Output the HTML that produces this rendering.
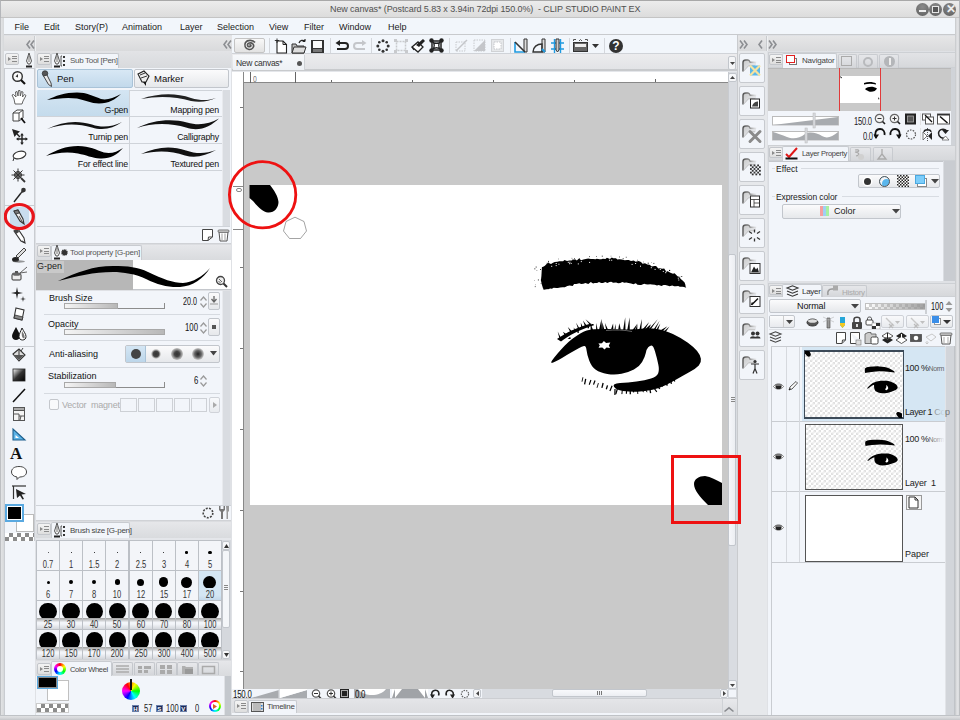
<!DOCTYPE html>
<html><head><meta charset="utf-8">
<style>
*{margin:0;padding:0;box-sizing:border-box}
html,body{width:960px;height:720px;overflow:hidden;background:#e4e6ea;font-family:"Liberation Sans",sans-serif;font-size:9px;color:#222}
.a{position:absolute}
svg{position:absolute;overflow:visible}
.pbg{background:#f2f5fa}
.t{position:absolute;white-space:nowrap;line-height:1}
.hdr{position:absolute;background:linear-gradient(#d2d4d8 0,#d2d4d8 1px,#ececee 2px,#dcdde0 100%)}
.mbtn{position:absolute;width:14px;height:12px;border:1px solid #c4c7cc;border-radius:2px;background:linear-gradient(#f4f4f4,#dedede)}
.mbtn:after{content:"";position:absolute;left:6px;top:2px;width:5px;height:6px;background:repeating-linear-gradient(#8a8a8a 0,#8a8a8a 1px,transparent 1px,transparent 2.5px)}.mbtn:before{content:"";position:absolute;left:2px;top:2.5px;border-left:3px solid #8a8a8a;border-top:2.5px solid transparent;border-bottom:2.5px solid transparent}
.tab{position:absolute;background:#f2f5fa;border:1px solid #c8cbd0;border-bottom:none;border-radius:2px 2px 0 0}
.tabg{position:absolute;background:linear-gradient(#e8e9ec,#d4d6da);border:1px solid #c4c7cc;border-bottom:none;border-radius:2px 2px 0 0}
.sep{position:absolute;height:1px;background:#d6dae0}
.btn{position:absolute;border:1px solid #c2c6cc;border-radius:2px;background:linear-gradient(#fbfbfc,#e6e8eb)}
.cell{position:absolute;border-right:1px solid #cfd3d9;border-bottom:1px solid #cfd3d9;background:#f2f5fa}
</style></head><body>
<svg width="0" height="0" style="position:absolute">
<defs>
<symbol id="stk" viewBox="0 0 100 20" preserveAspectRatio="none"><path d="M0,15 C12,7 25,2 40,3 C55,4 65,13 78,14 C88,14.5 95,9 100,5 C96,11 88,18 76,18.5 C62,19 52,12 40,9 C26,6 12,10 0,15Z"/></symbol>
</defs></svg>
<!-- frame + title + menu -->
<div class="a" style="left:0;top:0;width:960px;height:720px;border:1px solid #b4b6ba;border-top-color:#a8a8a8"></div>
<div class="a" style="left:1px;top:1px;width:958px;height:17px;background:linear-gradient(#ececec,#dcdcdc);border-bottom:1px solid #c4c4c4"></div>
<div class="t" style="left:330px;top:5px;font-size:9px;color:#505050;letter-spacing:-0.1px">New canvas* (Postcard 5.83 x 3.94in 72dpi 150.0%)&nbsp; - CLIP STUDIO PAINT EX</div>
<div class="a" style="left:916px;top:3px;width:13px;height:13px;border-radius:50%;background:radial-gradient(circle at 50% 30%,#8a8a8a,#5e5e5e)"></div>
<div class="a" style="left:919px;top:10px;width:7px;height:2px;background:#eee"></div>
<div class="a" style="left:929px;top:3px;width:13px;height:13px;border-radius:50%;background:radial-gradient(circle at 50% 30%,#8a8a8a,#5e5e5e)"></div>
<div class="a" style="left:932px;top:6px;width:7px;height:7px;border:1.5px solid #e6e6e6;background:#555"></div>
<div class="a" style="left:943px;top:3px;width:13px;height:13px;border-radius:50%;background:radial-gradient(circle at 50% 30%,#8a8a8a,#5e5e5e)"></div>
<div class="t" style="left:945.5px;top:3px;font-size:12px;font-weight:bold;color:#eee">&#x2715;</div>
<div class="a" style="left:4px;top:18px;width:951px;height:17px;background:#f2f6fb;border-bottom:1px solid #c8cacd"></div>
<div class="t" style="left:14.5px;top:22.5px;font-size:9px;color:#1a1a1a">File</div>
<div class="t" style="left:44px;top:22.5px;font-size:9px;color:#1a1a1a">Edit</div>
<div class="t" style="left:75px;top:22.5px;font-size:9px;color:#1a1a1a">Story(P)</div>
<div class="t" style="left:122px;top:22.5px;font-size:9px;color:#1a1a1a">Animation</div>
<div class="t" style="left:180px;top:22.5px;font-size:9px;color:#1a1a1a">Layer</div>
<div class="t" style="left:217px;top:22.5px;font-size:9px;color:#1a1a1a">Selection</div>
<div class="t" style="left:269px;top:22.5px;font-size:9px;color:#1a1a1a">View</div>
<div class="t" style="left:304px;top:22.5px;font-size:9px;color:#1a1a1a">Filter</div>
<div class="t" style="left:339px;top:22.5px;font-size:9px;color:#1a1a1a">Window</div>
<div class="t" style="left:388px;top:22.5px;font-size:9px;color:#1a1a1a">Help</div>
<!-- LEFT PANEL -->
<div class="a" style="left:1px;top:35px;width:3px;height:682px;background:#dfe2e6;border-left:1px solid #c8cbd0"></div>
<div class="a" style="left:4px;top:35px;width:228px;height:682px;background:#dfe1e5"></div>
<div class="a" style="left:4px;top:36px;width:228px;height:15px;background:linear-gradient(#e6e6e7,#d9dadc)"></div>
<div class="a" style="left:34px;top:36px;width:2px;height:15px;background:#eef0f2;border-left:1px solid #c9cbce"></div>
<svg style="left:26px;top:40px" width="9" height="9" viewBox="0 0 9 9"><path d="M4,0.5 L1,4.5 L4,8.5 M8,0.5 L5,4.5 L8,8.5" fill="none" stroke="#8c8e92" stroke-width="1.6"/></svg>
<svg style="left:223px;top:40px" width="9" height="9" viewBox="0 0 9 9"><path d="M4,0.5 L1,4.5 L4,8.5 M8,0.5 L5,4.5 L8,8.5" fill="none" stroke="#8c8e92" stroke-width="1.6"/></svg>
<!-- tab row left -->
<div class="a" style="left:4px;top:51px;width:30px;height:17px;background:#f0f3f7"></div>
<div class="a" style="left:36px;top:51px;width:195px;height:17px;background:linear-gradient(#e2e3e6,#d8dadd)"></div>
<div class="mbtn" style="left:5px;top:53px"></div>
<div class="mbtn" style="left:37px;top:53px"></div>
<svg style="left:25px;top:53px" width="8" height="15" viewBox="0 0 8 15"><path d="M4,0 L6.5,8 L5,11 L3,11 L1.5,8Z" fill="#f4f4f4" stroke="#444" stroke-width="0.9"/><path d="M4,3 L4,9" stroke="#444" stroke-width="0.7"/><rect x="1" y="12.5" width="6" height="2" fill="#222"/></svg>
<div class="tab" style="left:51px;top:53px;width:68px;height:15px"></div>
<svg style="left:53px;top:53px" width="8" height="15" viewBox="0 0 8 15"><path d="M4,0 L6.5,8 L5,11 L3,11 L1.5,8Z" fill="#f4f4f4" stroke="#444" stroke-width="0.9"/><path d="M4,3 L4,9" stroke="#444" stroke-width="0.7"/><rect x="1" y="12.5" width="6" height="2" fill="#222"/></svg>
<svg style="left:60px;top:55px" width="6" height="12" viewBox="0 0 6 12"><path d="M2,1 L1,1 L1,11 L2,11" stroke="#333" fill="none" stroke-width="0.8"/><rect x="3" y="1" width="2" height="2" fill="#333"/><rect x="3" y="5" width="2" height="2" fill="#333"/><rect x="3" y="9" width="2" height="2" fill="#333"/></svg>
<div class="t" style="left:70px;top:57px;font-size:8px;letter-spacing:-0.3px;color:#555">Sub Tool [Pen]</div>
<!-- tool column -->
<div class="a pbg" style="left:4px;top:68px;width:31px;height:435px;border:1px solid #c9ccd1"></div>
<div class="a" style="left:5px;top:205px;width:29px;height:1px;background:#c9ccd1"></div>
<div class="a" style="left:5px;top:346px;width:29px;height:1px;background:#c9ccd1"></div>
<div class="a" style="left:10px;top:207px;width:19px;height:20px;background:#c9ddee"></div>
<!-- icons -->
<svg style="left:11px;top:70px" width="16" height="16" viewBox="0 0 16 16"><circle cx="6.5" cy="6.5" r="4.8" fill="#fafafa" stroke="#333" stroke-width="1.4"/><path d="M10,10 L14,14" stroke="#111" stroke-width="2.2"/><path d="M7,4 L4.5,6.5 L7,7.5Z" fill="#333"/></svg>
<svg style="left:11px;top:89px" width="16" height="16" viewBox="0 0 16 16"><path d="M4,15 L3,10 L1,6 L2.5,5.5 L5,8 L4.5,3 L6,2.5 L7,7 L7.5,1.5 L9,1.5 L9.3,7 L10.5,2.5 L12,3 L11.5,8 L13.5,5.5 L15,6.5 L12,12 L11,15Z" fill="#fff" stroke="#555" stroke-width="0.9"/></svg>
<svg style="left:11px;top:109px" width="16" height="16" viewBox="0 0 16 16"><path d="M2,4 L6,1 L12,1 L12,9 L8,12 L2,12Z M2,4 L8,4 L8,12 M8,4 L12,1" fill="#fff" stroke="#444" stroke-width="1"/><path d="M10,9 L14,14" stroke="#111" stroke-width="1.8"/></svg>
<svg style="left:11px;top:128px" width="17" height="17" viewBox="0 0 17 17"><path d="M1,1 L9,3.5 L6.5,5.5 L9.5,8.5 L8.5,9.5 L5.5,6.5 L3.5,9Z" fill="#222"/><path d="M11,6.5 L11,15.5 M6.5,11 L15.5,11" stroke="#222" stroke-width="1.4"/><path d="M11,5 L9.2,7.5 L12.8,7.5Z M11,17 L9.2,14.5 L12.8,14.5Z M5,11 L7.5,9.2 L7.5,12.8Z M17,11 L14.5,9.2 L14.5,12.8Z" fill="#222"/></svg>
<svg style="left:11px;top:149px" width="16" height="14" viewBox="0 0 16 14"><ellipse cx="8.5" cy="6" rx="6.5" ry="3.6" transform="rotate(-15 8.5 6)" fill="#fff" stroke="#333" stroke-width="1.1"/><path d="M3,9 L2,12" stroke="#333" stroke-width="1"/></svg>
<svg style="left:11px;top:168px" width="16" height="16" viewBox="0 0 16 16"><circle cx="7" cy="7" r="3.5" fill="#888" stroke="#333"/><path d="M7,0.5 L7,13.5 M0.5,7 L13.5,7 M2.5,2.5 L11.5,11.5 M11.5,2.5 L2.5,11.5" stroke="#333" stroke-width="1"/><path d="M10,10 L14,14" stroke="#333" stroke-width="1.8"/></svg>
<svg style="left:11px;top:187px" width="16" height="16" viewBox="0 0 16 16"><path d="M3,15 L10,6" stroke="#222" stroke-width="1.4"/><path d="M9,7 L11,3 L13,5Z" fill="#333"/><circle cx="12.5" cy="3" r="2.3" fill="#333"/></svg>
<svg style="left:11px;top:209px" width="16" height="16" viewBox="0 0 16 16"><path d="M3,2 L7,1 L12,10 L13,15 L9,12 Z" fill="#eee" stroke="#333" stroke-width="1.1"/><path d="M3,2 L7,1 L8.5,4 L4.5,5Z" fill="#777" stroke="#333" stroke-width="0.8"/><path d="M8,7 L12,14" stroke="#333" stroke-width="0.8"/></svg>
<svg style="left:11px;top:228px" width="16" height="16" viewBox="0 0 16 16"><path d="M3,3 L7,1 L13,10 L14,15 L10,13Z" fill="#fff" stroke="#333" stroke-width="1.1"/><path d="M3,3 L7,1 L8,4 L5,6Z" fill="#444"/><path d="M11,12 L14,15 L12,14Z" fill="#222"/></svg>
<svg style="left:11px;top:247px" width="16" height="16" viewBox="0 0 16 16"><path d="M13,1 L15,3 L7,11 L5,9Z" fill="#ddd" stroke="#444" stroke-width="1"/><ellipse cx="4.5" cy="12.5" rx="3.5" ry="2.5" fill="#222"/><ellipse cx="8" cy="14.5" rx="6" ry="1.2" fill="#555" opacity=".6"/></svg>
<svg style="left:10px;top:266px" width="18" height="16" viewBox="0 0 18 16"><path d="M10,7 L17,1 M10,7 L17,6" stroke="#555" stroke-width="0.9"/><rect x="2" y="8" width="9" height="6" rx="1" fill="#eee" stroke="#333"/><ellipse cx="6.5" cy="8" rx="4.5" ry="1.8" fill="#666"/><path d="M5,5 L8,5 L8,7 L5,7Z" fill="#555"/></svg>
<svg style="left:11px;top:286px" width="16" height="16" viewBox="0 0 16 16"><path d="M6,1 L7,6 L12,7 L7,8 L6,13 L5,8 L0,7 L5,6Z" fill="#222"/><path d="M12,10 L12.6,12.4 L15,13 L12.6,13.6 L12,16 L11.4,13.6 L9,13 L11.4,12.4Z" fill="#333"/></svg>
<svg style="left:11px;top:306px" width="16" height="16" viewBox="0 0 16 16"><path d="M5,2 L13,4 L11,14 L3,12Z" fill="#fff" stroke="#333" stroke-width="1.1"/><path d="M4,9 L12,11 L11,14 L3,12Z" fill="#888" stroke="#333" stroke-width="0.8"/></svg>
<svg style="left:11px;top:325px" width="16" height="16" viewBox="0 0 16 16"><path d="M5,2 C3,6 1,9 1,11 C1,13.5 3,15 5,15 C7,15 9,13.5 9,11 C9,9 7,6 5,2Z" fill="#111"/><path d="M11,3 C9.5,7 8,9 8,11.5 C8,13.8 9.5,15 11.5,15 C13.5,15 15,13.8 15,11.5 C15,9 13,7 11,3Z" fill="#fff" stroke="#222" stroke-width="1"/><path d="M11,6 C13,9 14,11 13.5,13 C12,14 10,12 11,6Z" fill="#777"/></svg>
<svg style="left:11px;top:347px" width="16" height="16" viewBox="0 0 16 16"><path d="M2,7 L8,2 L14,8 L8,14Z" fill="#ddd" stroke="#333" stroke-width="1.1"/><path d="M8,2 L8,8" stroke="#333"/><path d="M12,1 L10,4" stroke="#444"/><path d="M3,8 L8,13 L13,8Z" fill="#555"/></svg>
<svg style="left:11px;top:367px" width="16" height="16" viewBox="0 0 16 16"><defs><linearGradient id="gg" x1="0" y1="0" x2="1" y2="1"><stop offset="0" stop-color="#fff"/><stop offset="0.5" stop-color="#333"/><stop offset="1" stop-color="#000"/></linearGradient></defs><rect x="2" y="2" width="12" height="12" fill="url(#gg)" stroke="#222" stroke-width="0.8"/></svg>
<svg style="left:11px;top:387px" width="16" height="16" viewBox="0 0 16 16"><path d="M2,15 L14,2" stroke="#111" stroke-width="1.5"/></svg>
<svg style="left:11px;top:406px" width="16" height="16" viewBox="0 0 16 16"><rect x="2.5" y="1.5" width="11" height="13" fill="#f4f4f4" stroke="#555"/><rect x="2.5" y="1.5" width="11" height="3" fill="#aaa" stroke="#555"/><path d="M3,8 L8,8 L8,14 M8,10 L13,10 M10,10 L9,14" stroke="#555" fill="none"/></svg>
<svg style="left:11px;top:426px" width="16" height="16" viewBox="0 0 16 16"><path d="M2,3 L2,14 L14,14Z" fill="#5ab2e6" stroke="#1e5f8c" stroke-width="1.1"/><path d="M4.5,9 L4.5,12 L8,12Z" fill="#fff"/></svg>
<div class="t" style="left:10px;top:445px;font-size:17px;font-family:'Liberation Serif',serif;font-weight:bold;color:#111">A</div>
<svg style="left:10px;top:465px" width="18" height="15" viewBox="0 0 18 15"><path d="M9,1.5 C14,1.5 16.5,4 16.5,7 C16.5,10 14,12 9.5,12 L7,14.5 L7,12 C3.5,11.5 1.5,9.5 1.5,7 C1.5,4 4,1.5 9,1.5Z" fill="#fff" stroke="#444" stroke-width="1"/></svg>
<svg style="left:11px;top:484px" width="16" height="16" viewBox="0 0 16 16"><path d="M1,2 L15,2" stroke="#333" stroke-width="1.2"/><path d="M2.5,2 L2.5,15" stroke="#333" stroke-width="1.2"/><path d="M5,5 L15,10 L10.5,10.5 L13,15 L11.5,15.5 L9,11.5 L6,14Z" fill="#222"/></svg>
<!-- colors -->
<div class="a pbg" style="left:4px;top:502px;width:31px;height:40px;border-left:1px solid #c9ccd1;border-right:1px solid #c9ccd1"></div>
<div class="a" style="left:16px;top:514px;width:18px;height:18px;background:#fff;border:1px solid #bbb"></div>
<div class="a" style="left:5px;top:504px;width:19px;height:18px;background:#000;border:2px solid #5aa9e0;box-shadow:inset 0 0 0 1px #fff"></div>
<div class="a" style="left:5px;top:533px;width:29px;height:8px;background-color:#fff;background-image:linear-gradient(45deg,#8c8c8c 25%,transparent 25%,transparent 75%,#8c8c8c 75%),linear-gradient(45deg,#8c8c8c 25%,transparent 25%,transparent 75%,#8c8c8c 75%);background-size:8px 8px;background-position:0 0,4px 4px"></div>
<!-- red circle -->
<svg style="left:0;top:200px" width="40" height="34" viewBox="0 0 40 34"><ellipse cx="19.3" cy="16.5" rx="14" ry="12" fill="none" stroke="#e8141a" stroke-width="3.2"/></svg>
<!-- SUB TOOL PANEL -->
<div class="a pbg" style="left:36px;top:68px;width:195px;height:175px"></div>
<div class="btn" style="left:37px;top:69px;width:96px;height:19px;background:linear-gradient(#d8e8f5,#c2d9eb);border-color:#a9c3d8"></div>
<div class="btn" style="left:134px;top:69px;width:95px;height:19px"></div>
<svg style="left:41px;top:70px" width="12" height="17" viewBox="0 0 12 17"><circle cx="4" cy="3.5" r="2.8" fill="#555" stroke="#222" stroke-width="0.6"/><path d="M2.5,6 L6,5 L10,13 L10.5,16.5 L7.5,14.5Z" fill="#e8e8e8" stroke="#333" stroke-width="0.9"/></svg>
<div class="t" style="left:57px;top:74px;font-size:9.5px;color:#111">Pen</div>
<svg style="left:136px;top:70px" width="16" height="17" viewBox="0 0 16 17"><path d="M2,4 L8,1 L13,6 L10,12 L6,12Z" fill="#eee" stroke="#222" stroke-width="1.1"/><path d="M4,5 L9,3 M5,8 L11,6" stroke="#222" stroke-width="0.9"/><path d="M7,12 L10,12 L10,16 Z" fill="#111"/></svg>
<div class="t" style="left:154px;top:74px;font-size:9.5px;color:#111">Marker</div>
<div class="a" style="left:37px;top:90px;width:185px;height:80px;background:#f2f5fa;border-top:1px solid #cfd3d9"></div>
<div class="a" style="left:37px;top:90px;width:92px;height:26px;background:linear-gradient(#d4e5f3,#c4dbec)"></div>
<div class="a" style="left:129px;top:90px;width:1px;height:80px;background:#cfd3d9"></div>
<div class="a" style="left:37px;top:116px;width:185px;height:1px;background:#cfd3d9"></div>
<div class="a" style="left:37px;top:143px;width:185px;height:1px;background:#cfd3d9"></div>
<div class="a" style="left:37px;top:170px;width:185px;height:1px;background:#cfd3d9"></div>
<div class="a" style="left:222px;top:90px;width:8px;height:136px;background:#d9dce1;border-left:1px solid #e8eaee"></div>
<svg style="left:47px;top:91px" width="74" height="13" viewBox="0 0 74 13"><path d="M0,9 C8,5 18,1.5 30,1.5 C40,1.5 46,5 54,8 C60,9.5 66,7 74,3 C68,8.5 62,12.5 52,12.5 C44,12.5 38,9 30,7.5 C20,6 10,7.5 0,9Z" fill="#000"/></svg>
<div class="t" style="left:37px;width:91px;top:106px;text-align:right;font-size:8.8px;letter-spacing:-0.2px;color:#111">G-pen</div>
<svg style="left:141px;top:93px" width="75" height="10" viewBox="0 0 75 10"><path d="M0,6 C18,0 35,0 50,5 C60,8 68,7.5 75,5 C68,8 60,10 50,8 C35,3.5 18,2.5 0,6Z" fill="#222"/></svg>
<div class="t" style="left:130px;width:89px;top:106px;text-align:right;font-size:8.8px;letter-spacing:-0.2px;color:#111">Mapping pen</div>
<svg style="left:47px;top:120px" width="75" height="11" viewBox="0 0 75 11"><path d="M0,9 C15,1.5 30,0 45,4.5 C55,8 65,7 75,2 C66,8.5 56,11 45,7.5 C30,3 15,3.5 0,9Z" fill="#111"/></svg>
<div class="t" style="left:37px;width:91px;top:133px;text-align:right;font-size:8.8px;letter-spacing:-0.2px;color:#111">Turnip pen</div>
<svg style="left:137px;top:118px" width="82" height="13" viewBox="0 0 82 13"><path d="M0,10 C15,2 35,0 50,4.5 C62,8 72,6 82,0.5 C73,9 62,14 49,9.5 C35,5 15,4.5 0,10Z" fill="#111"/></svg>
<div class="t" style="left:130px;width:89px;top:133px;text-align:right;font-size:8.8px;letter-spacing:-0.2px;color:#111">Calligraphy</div>
<svg style="left:46px;top:144px" width="77" height="15" viewBox="0 0 77 15"><path d="M0,12 C10,6 20,2 32,2 C44,2 50,6 58,8.5 C65,10 71,8 77,4 C71,11 64,15 54,14.5 C46,14 40,11 32,9.5 C20,7.5 10,9 0,12Z" fill="#000"/></svg>
<div class="t" style="left:37px;width:91px;top:160px;text-align:right;font-size:8.8px;letter-spacing:-0.2px;color:#111">For effect line</div>
<svg style="left:141px;top:146px" width="75" height="12" viewBox="0 0 75 12"><path d="M0,8 C15,1 30,-0.5 45,4.5 C55,8 65,8 75,4 C65,9.5 55,12.5 44,9.5 C30,4.5 15,4.5 0,8Z" fill="#111"/></svg>
<div class="t" style="left:130px;width:89px;top:160px;text-align:right;font-size:8.8px;letter-spacing:-0.2px;color:#111">Textured pen</div>
<div class="a" style="left:37px;top:226px;width:193px;height:1px;background:#cfd3d9"></div>
<svg style="left:201px;top:228px" width="13" height="14" viewBox="0 0 13 14"><path d="M1.5,1.5 L11.5,1.5 L11.5,9 L7,12.5 L1.5,12.5Z" fill="#fff" stroke="#444" stroke-width="1"/><path d="M7,12.5 L7.5,9 L11.5,9" fill="none" stroke="#444"/></svg>
<svg style="left:217px;top:228px" width="13" height="14" viewBox="0 0 13 14"><path d="M2,4 L3,13 L10,13 L11,4Z" fill="#fff" stroke="#555" stroke-width="1"/><rect x="1" y="2" width="11" height="2.2" rx="1" fill="#ddd" stroke="#555" stroke-width="0.8"/><path d="M5,5.5 L5,12 M8,5.5 L8,12" stroke="#777" stroke-width="0.7"/></svg>
<!-- TOOL PROPERTY -->
<div class="a" style="left:36px;top:243px;width:195px;height:17px;background:linear-gradient(#d0d2d6 0,#d0d2d6 1px,#e6e7ea 2px,#d9dbde)"></div>
<div class="mbtn" style="left:37px;top:245px"></div>
<div class="tab" style="left:51px;top:245px;width:91px;height:15px"></div>
<svg style="left:53px;top:245px" width="8" height="15" viewBox="0 0 8 15"><path d="M4,0 L6.5,8 L5,11 L3,11 L1.5,8Z" fill="#f4f4f4" stroke="#444" stroke-width="0.9"/><path d="M4,3 L4,9" stroke="#444" stroke-width="0.7"/><rect x="1" y="12.5" width="6" height="2" fill="#222"/></svg>
<svg style="left:61px;top:249px" width="7" height="7" viewBox="0 0 7 7"><circle cx="3.5" cy="3.5" r="2.6" fill="#333" stroke="#333" stroke-width="1.5" stroke-dasharray="1 0.6"/></svg>
<div class="t" style="left:70px;top:249px;font-size:8px;letter-spacing:-0.25px;color:#555">Tool property [G-pen]</div>
<div class="a" style="left:36px;top:260px;width:195px;height:30px;background:#fff;border-bottom:1px solid #c4c7cc"></div>
<div class="a" style="left:36px;top:260px;width:97px;height:30px;background:#b7b7b7"></div>
<div class="a" style="left:37px;top:261px;width:27px;height:12px;background:#c9c9c9"></div>
<div class="t" style="left:37px;top:262px;font-size:9px;color:#222">G-pen</div>
<svg style="left:58px;top:264px" width="152" height="24" viewBox="0 0 152 24"><path d="M0,17 C20,8 35,2 55,2 C70,2 80,3 90,8 C105,15 115,19 125,19 C135,18.5 145,12 152,4 C145,15 135,22 122,23 C110,23.5 100,21 88,15 C78,10 65,8 55,8 C35,8 20,12 0,17Z" fill="#000"/></svg>
<svg style="left:215px;top:275px" width="13" height="13" viewBox="0 0 13 13"><circle cx="5.5" cy="5.5" r="4" fill="#eee" stroke="#444" stroke-width="1.3"/><path d="M8.5,8.5 L12,12" stroke="#333" stroke-width="2"/><path d="M4,4 L7,7 M3.5,6 L5.5,8" stroke="#555" stroke-width="0.9"/></svg>
<div class="a pbg" style="left:36px;top:291px;width:186px;height:214px"></div>
<div class="a" style="left:222px;top:291px;width:8px;height:214px;background:#d9dce1;border-left:1px solid #e8eaee"></div>
<!-- property rows -->
<div class="t" style="left:49px;top:294px;font-size:9px;color:#111">Brush Size</div>
<div class="a" style="left:64px;top:303px;width:101px;height:6px;border-bottom:1px solid #8c8c8c;border-right:1px solid #8c8c8c"></div>
<div class="a" style="left:64px;top:303px;width:54px;height:6px;background:linear-gradient(90deg,#f4f4f4,#b8b8b8);border:1px solid #a8a8a8"></div>
<div class="t" style="left:183px;top:296px;font-size:10.5px;color:#111;transform:scaleX(0.68);transform-origin:left">20.0</div>
<svg style="left:200px;top:296px" width="7" height="12" viewBox="0 0 7 12"><path d="M0.5,4.5 L3.5,1 L6.5,4.5 M0.5,7.5 L3.5,11 L6.5,7.5" fill="none" stroke="#999" stroke-width="1.2"/></svg>
<div class="btn" style="left:208px;top:292px;width:12px;height:18px"></div>
<svg style="left:210px;top:296px" width="8" height="9" viewBox="0 0 8 9"><path d="M4,0 L4,5 M1.5,3 L4,6 L6.5,3" fill="none" stroke="#666" stroke-width="1.3"/><path d="M0,8 L8,8" stroke="#999"/></svg>
<div class="sep" style="left:44px;top:314px;width:176px"></div>
<div class="t" style="left:48px;top:320px;font-size:9px;color:#111">Opacity</div>
<div class="a" style="left:64px;top:329px;width:101px;height:6px;background:linear-gradient(90deg,#f4f4f4,#b8b8b8);border:1px solid #a8a8a8"></div>
<div class="t" style="left:185px;top:322px;font-size:10.5px;color:#111;transform:scaleX(0.74);transform-origin:left">100</div>
<svg style="left:200px;top:322px" width="7" height="12" viewBox="0 0 7 12"><path d="M0.5,4.5 L3.5,1 L6.5,4.5 M0.5,7.5 L3.5,11 L6.5,7.5" fill="none" stroke="#999" stroke-width="1.2"/></svg>
<div class="btn" style="left:208px;top:318px;width:12px;height:18px"></div>
<div class="a" style="left:212px;top:325px;width:4px;height:4px;background:#555"></div>
<div class="sep" style="left:44px;top:340px;width:176px"></div>
<div class="t" style="left:49px;top:350px;font-size:9px;color:#111">Anti-aliasing</div>
<div class="btn" style="left:125px;top:345px;width:95px;height:18px"></div>
<div class="a" style="left:126px;top:346px;width:20px;height:16px;background:linear-gradient(#d4e6f4,#bcd6ea);border-right:1px solid #a9c3d8"></div>
<div class="a" style="left:131px;top:349px;width:10px;height:10px;border-radius:50%;background:#444"></div>
<div class="a" style="left:151px;top:349px;width:10px;height:10px;border-radius:50%;background:radial-gradient(#333 0,#444 40%,#bbb 60%,#eee 75%)"></div>
<div class="a" style="left:171px;top:348px;width:12px;height:12px;border-radius:50%;background:radial-gradient(#333 0,#444 30%,#999 55%,#ddd 80%,transparent 90%)"></div>
<div class="a" style="left:192px;top:348px;width:12px;height:12px;border-radius:50%;background:radial-gradient(#222 0,#666 40%,#bbb 65%,transparent 90%)"></div>
<svg style="left:210px;top:351px" width="7" height="5" viewBox="0 0 7 5"><path d="M0,0 L7,0 L3.5,4.5Z" fill="#444"/></svg>
<div class="sep" style="left:44px;top:367px;width:176px"></div>
<div class="t" style="left:48px;top:372px;font-size:9px;color:#111">Stabilization</div>
<div class="a" style="left:64px;top:382px;width:101px;height:6px;border-bottom:1px solid #8c8c8c;border-right:1px solid #8c8c8c"></div>
<div class="a" style="left:64px;top:382px;width:52px;height:6px;background:linear-gradient(90deg,#f4f4f4,#b8b8b8);border:1px solid #a8a8a8"></div>
<div class="t" style="left:194px;top:375px;font-size:10.5px;color:#111;transform:scaleX(0.74);transform-origin:left">6</div>
<svg style="left:200px;top:375px" width="7" height="12" viewBox="0 0 7 12"><path d="M0.5,4.5 L3.5,1 L6.5,4.5 M0.5,7.5 L3.5,11 L6.5,7.5" fill="none" stroke="#999" stroke-width="1.2"/></svg>
<div class="sep" style="left:44px;top:393px;width:176px"></div>
<div class="a" style="left:49px;top:399px;width:10px;height:11px;border:1px solid #c4c7cc;border-radius:2px;background:#f8f9fb"></div>
<div class="t" style="left:62px;top:401px;font-size:9px;color:#aaa;letter-spacing:-0.2px">Vector&nbsp; magnet</div>
<div class="a" style="left:120px;top:398px;width:17px;height:14px;border:1px solid #cdd0d5"></div>
<div class="a" style="left:138px;top:398px;width:17px;height:14px;border:1px solid #cdd0d5"></div>
<div class="a" style="left:156px;top:398px;width:17px;height:14px;border:1px solid #cdd0d5"></div>
<div class="a" style="left:174px;top:398px;width:16px;height:14px;border:1px solid #cdd0d5"></div>
<div class="a" style="left:191px;top:398px;width:16px;height:14px;border:1px solid #cdd0d5"></div>
<div class="btn" style="left:209px;top:397px;width:11px;height:16px;opacity:.7"></div>
<svg style="left:213px;top:402px" width="4" height="6" viewBox="0 0 4 6"><path d="M0,0 L4,3 L0,6Z" fill="#aaa"/></svg>
<div class="a pbg" style="left:36px;top:505px;width:195px;height:15px;border-top:1px solid #cfd3d9"></div>
<svg style="left:201px;top:506px" width="14" height="14" viewBox="0 0 14 14"><circle cx="7" cy="7" r="4.8" fill="none" stroke="#444" stroke-width="1.6" stroke-dasharray="2 1.3"/></svg>
<svg style="left:217px;top:505px" width="13" height="15" viewBox="0 0 13 15"><path d="M2,1 L2,5 L4,7 L4,14 L6,14 L6,7 L8,5 L8,1 L6.5,1 L6.5,4 L3.5,4 L3.5,1Z" fill="#777"/><path d="M9,1 L12,1 L12,6 L11,7 L11,14 L9.5,14 L9.5,7Z" fill="#999"/></svg>
<!-- BRUSH SIZE -->
<div class="a" style="left:36px;top:520px;width:195px;height:18px;background:linear-gradient(#d0d2d6 0,#d0d2d6 1px,#e6e7ea 2px,#d9dbde)"></div>
<div class="mbtn" style="left:37px;top:523px"></div>
<div class="tab" style="left:51px;top:522px;width:79px;height:16px"></div>
<svg style="left:53px;top:523px" width="8" height="15" viewBox="0 0 8 15"><path d="M4,0 L6.5,8 L5,11 L3,11 L1.5,8Z" fill="#f4f4f4" stroke="#444" stroke-width="0.9"/><path d="M4,3 L4,9" stroke="#444" stroke-width="0.7"/><rect x="1" y="12.5" width="6" height="2" fill="#222"/></svg>
<svg style="left:60px;top:525px" width="6" height="12" viewBox="0 0 6 12"><path d="M2,1 L1,1 L1,11 L2,11" stroke="#333" fill="none" stroke-width="0.8"/><rect x="3" y="1" width="2" height="2" fill="#333"/><rect x="3" y="5" width="2" height="2" fill="#333"/><rect x="3" y="9" width="2" height="2" fill="#333"/></svg>
<div class="t" style="left:70px;top:527px;font-size:8px;letter-spacing:-0.25px;color:#444">Brush size [G-pen]</div>
<div class="a" style="left:36px;top:538px;width:195px;height:122px;background:#e4e6ea"></div>
<div class="a" style="left:36px;top:540px;width:186px;height:120px;background:#bcc0c6"></div>
<div class="a" style="left:37.0px;top:541.0px;width:22.1px;height:28.8px;background:#f3f5f9;overflow:hidden"><div class="a" style="left:10.6px;top:11.1px;width:0.9px;height:0.9px;border-radius:50%;background:#000"></div><div class="a" style="left:0;top:17px;width:22.1px;height:11.8px;background:transparent"></div><div class="t" style="left:0;width:22.1px;top:18px;text-align:center;font-size:10.5px;color:#333;transform:scaleX(0.72);transform-origin:center">0.7</div></div>
<div class="a" style="left:60.1px;top:541.0px;width:22.1px;height:28.8px;background:#f3f5f9;overflow:hidden"><div class="a" style="left:10.6px;top:11.0px;width:1.0px;height:1.0px;border-radius:50%;background:#000"></div><div class="a" style="left:0;top:17px;width:22.1px;height:11.8px;background:transparent"></div><div class="t" style="left:0;width:22.1px;top:18px;text-align:center;font-size:10.5px;color:#333;transform:scaleX(0.72);transform-origin:center">1</div></div>
<div class="a" style="left:83.2px;top:541.0px;width:22.2px;height:28.8px;background:#f3f5f9;overflow:hidden"><div class="a" style="left:10.6px;top:11.0px;width:1.0px;height:1.0px;border-radius:50%;background:#000"></div><div class="a" style="left:0;top:17px;width:22.2px;height:11.8px;background:transparent"></div><div class="t" style="left:0;width:22.2px;top:18px;text-align:center;font-size:10.5px;color:#333;transform:scaleX(0.72);transform-origin:center">1.5</div></div>
<div class="a" style="left:106.4px;top:541.0px;width:22.1px;height:28.8px;background:#f3f5f9;overflow:hidden"><div class="a" style="left:10.5px;top:10.9px;width:1.1px;height:1.1px;border-radius:50%;background:#000"></div><div class="a" style="left:0;top:17px;width:22.1px;height:11.8px;background:transparent"></div><div class="t" style="left:0;width:22.1px;top:18px;text-align:center;font-size:10.5px;color:#333;transform:scaleX(0.72);transform-origin:center">2</div></div>
<div class="a" style="left:129.5px;top:541.0px;width:22.1px;height:28.8px;background:#f3f5f9;overflow:hidden"><div class="a" style="left:10.4px;top:10.9px;width:1.2px;height:1.2px;border-radius:50%;background:#000"></div><div class="a" style="left:0;top:17px;width:22.1px;height:11.8px;background:transparent"></div><div class="t" style="left:0;width:22.1px;top:18px;text-align:center;font-size:10.5px;color:#333;transform:scaleX(0.72);transform-origin:center">2.5</div></div>
<div class="a" style="left:152.6px;top:541.0px;width:22.2px;height:28.8px;background:#f3f5f9;overflow:hidden"><div class="a" style="left:10.4px;top:10.8px;width:1.5px;height:1.5px;border-radius:50%;background:#000"></div><div class="a" style="left:0;top:17px;width:22.2px;height:11.8px;background:transparent"></div><div class="t" style="left:0;width:22.2px;top:18px;text-align:center;font-size:10.5px;color:#333;transform:scaleX(0.72);transform-origin:center">3</div></div>
<div class="a" style="left:175.8px;top:541.0px;width:22.1px;height:28.8px;background:#f3f5f9;overflow:hidden"><div class="a" style="left:9.7px;top:10.2px;width:2.6px;height:2.6px;border-radius:50%;background:#000"></div><div class="a" style="left:0;top:17px;width:22.1px;height:11.8px;background:transparent"></div><div class="t" style="left:0;width:22.1px;top:18px;text-align:center;font-size:10.5px;color:#333;transform:scaleX(0.72);transform-origin:center">4</div></div>
<div class="a" style="left:198.9px;top:541.0px;width:22.1px;height:28.8px;background:#f3f5f9;overflow:hidden"><div class="a" style="left:9.3px;top:9.8px;width:3.4px;height:3.4px;border-radius:50%;background:#000"></div><div class="a" style="left:0;top:17px;width:22.1px;height:11.8px;background:transparent"></div><div class="t" style="left:0;width:22.1px;top:18px;text-align:center;font-size:10.5px;color:#333;transform:scaleX(0.72);transform-origin:center">5</div></div>
<div class="a" style="left:37.0px;top:570.8px;width:22.1px;height:28.8px;background:#f3f5f9;overflow:hidden"><div class="a" style="left:9.5px;top:9.9px;width:3.2px;height:3.2px;border-radius:50%;background:#000"></div><div class="a" style="left:0;top:17px;width:22.1px;height:11.8px;background:transparent"></div><div class="t" style="left:0;width:22.1px;top:18px;text-align:center;font-size:10.5px;color:#333;transform:scaleX(0.72);transform-origin:center">6</div></div>
<div class="a" style="left:60.1px;top:570.8px;width:22.1px;height:28.8px;background:#f3f5f9;overflow:hidden"><div class="a" style="left:9.2px;top:9.6px;width:3.8px;height:3.8px;border-radius:50%;background:#000"></div><div class="a" style="left:0;top:17px;width:22.1px;height:11.8px;background:transparent"></div><div class="t" style="left:0;width:22.1px;top:18px;text-align:center;font-size:10.5px;color:#333;transform:scaleX(0.72);transform-origin:center">7</div></div>
<div class="a" style="left:83.2px;top:570.8px;width:22.2px;height:28.8px;background:#f3f5f9;overflow:hidden"><div class="a" style="left:8.9px;top:9.3px;width:4.4px;height:4.4px;border-radius:50%;background:#000"></div><div class="a" style="left:0;top:17px;width:22.2px;height:11.8px;background:transparent"></div><div class="t" style="left:0;width:22.2px;top:18px;text-align:center;font-size:10.5px;color:#333;transform:scaleX(0.72);transform-origin:center">8</div></div>
<div class="a" style="left:106.4px;top:570.8px;width:22.1px;height:28.8px;background:#f3f5f9;overflow:hidden"><div class="a" style="left:8.2px;top:8.7px;width:5.6px;height:5.6px;border-radius:50%;background:#000"></div><div class="a" style="left:0;top:17px;width:22.1px;height:11.8px;background:transparent"></div><div class="t" style="left:0;width:22.1px;top:18px;text-align:center;font-size:10.5px;color:#333;transform:scaleX(0.72);transform-origin:center">10</div></div>
<div class="a" style="left:129.5px;top:570.8px;width:22.1px;height:28.8px;background:#f3f5f9;overflow:hidden"><div class="a" style="left:7.3px;top:7.8px;width:7.4px;height:7.4px;border-radius:50%;background:#000"></div><div class="a" style="left:0;top:17px;width:22.1px;height:11.8px;background:transparent"></div><div class="t" style="left:0;width:22.1px;top:18px;text-align:center;font-size:10.5px;color:#333;transform:scaleX(0.72);transform-origin:center">12</div></div>
<div class="a" style="left:152.6px;top:570.8px;width:22.2px;height:28.8px;background:#f3f5f9;overflow:hidden"><div class="a" style="left:6.3px;top:6.7px;width:9.6px;height:9.6px;border-radius:50%;background:#000"></div><div class="a" style="left:0;top:17px;width:22.2px;height:11.8px;background:transparent"></div><div class="t" style="left:0;width:22.2px;top:18px;text-align:center;font-size:10.5px;color:#333;transform:scaleX(0.72);transform-origin:center">15</div></div>
<div class="a" style="left:175.8px;top:570.8px;width:22.1px;height:28.8px;background:#f3f5f9;overflow:hidden"><div class="a" style="left:5.4px;top:5.9px;width:11.2px;height:11.2px;border-radius:50%;background:#000"></div><div class="a" style="left:0;top:17px;width:22.1px;height:11.8px;background:transparent"></div><div class="t" style="left:0;width:22.1px;top:18px;text-align:center;font-size:10.5px;color:#333;transform:scaleX(0.72);transform-origin:center">17</div></div>
<div class="a" style="left:198.9px;top:570.8px;width:22.1px;height:28.8px;background:#d4e6f4;overflow:hidden"><div class="a" style="left:4.5px;top:5.0px;width:13.0px;height:13.0px;border-radius:50%;background:#000"></div><div class="a" style="left:0;top:17px;width:22.1px;height:11.8px;background:linear-gradient(#d4e6f4,#d4e6f4 60%,#c4d8ea)"></div><div class="t" style="left:0;width:22.1px;top:18px;text-align:center;font-size:10.5px;color:#333;transform:scaleX(0.72);transform-origin:center">20</div></div>
<div class="a" style="left:37.0px;top:600.5px;width:22.1px;height:28.8px;background:#f3f5f9;overflow:hidden"><div class="a" style="left:2.3px;top:2.2px;width:17.5px;height:17.5px;border-radius:50%;background:#000"></div><div class="a" style="left:0;top:17px;width:22.1px;height:11.8px;background:linear-gradient(#a0a0a0,#f3f5f9 40%,#f3f5f9 55%,#d4d7dc)"></div><div class="t" style="left:0;width:22.1px;top:18px;text-align:center;font-size:10.5px;color:#333;transform:scaleX(0.72);transform-origin:center">25</div></div>
<div class="a" style="left:60.1px;top:600.5px;width:22.1px;height:28.8px;background:#f3f5f9;overflow:hidden"><div class="a" style="left:2.3px;top:2.2px;width:17.5px;height:17.5px;border-radius:50%;background:#000"></div><div class="a" style="left:0;top:17px;width:22.1px;height:11.8px;background:linear-gradient(#a0a0a0,#f3f5f9 40%,#f3f5f9 55%,#d4d7dc)"></div><div class="t" style="left:0;width:22.1px;top:18px;text-align:center;font-size:10.5px;color:#333;transform:scaleX(0.72);transform-origin:center">30</div></div>
<div class="a" style="left:83.2px;top:600.5px;width:22.2px;height:28.8px;background:#f3f5f9;overflow:hidden"><div class="a" style="left:2.4px;top:2.2px;width:17.5px;height:17.5px;border-radius:50%;background:#000"></div><div class="a" style="left:0;top:17px;width:22.2px;height:11.8px;background:linear-gradient(#a0a0a0,#f3f5f9 40%,#f3f5f9 55%,#d4d7dc)"></div><div class="t" style="left:0;width:22.2px;top:18px;text-align:center;font-size:10.5px;color:#333;transform:scaleX(0.72);transform-origin:center">40</div></div>
<div class="a" style="left:106.4px;top:600.5px;width:22.1px;height:28.8px;background:#f3f5f9;overflow:hidden"><div class="a" style="left:2.3px;top:2.2px;width:17.5px;height:17.5px;border-radius:50%;background:#000"></div><div class="a" style="left:0;top:17px;width:22.1px;height:11.8px;background:linear-gradient(#a0a0a0,#f3f5f9 40%,#f3f5f9 55%,#d4d7dc)"></div><div class="t" style="left:0;width:22.1px;top:18px;text-align:center;font-size:10.5px;color:#333;transform:scaleX(0.72);transform-origin:center">50</div></div>
<div class="a" style="left:129.5px;top:600.5px;width:22.1px;height:28.8px;background:#f3f5f9;overflow:hidden"><div class="a" style="left:2.3px;top:2.2px;width:17.5px;height:17.5px;border-radius:50%;background:#000"></div><div class="a" style="left:0;top:17px;width:22.1px;height:11.8px;background:linear-gradient(#a0a0a0,#f3f5f9 40%,#f3f5f9 55%,#d4d7dc)"></div><div class="t" style="left:0;width:22.1px;top:18px;text-align:center;font-size:10.5px;color:#333;transform:scaleX(0.72);transform-origin:center">60</div></div>
<div class="a" style="left:152.6px;top:600.5px;width:22.2px;height:28.8px;background:#f3f5f9;overflow:hidden"><div class="a" style="left:2.4px;top:2.2px;width:17.5px;height:17.5px;border-radius:50%;background:#000"></div><div class="a" style="left:0;top:17px;width:22.2px;height:11.8px;background:linear-gradient(#a0a0a0,#f3f5f9 40%,#f3f5f9 55%,#d4d7dc)"></div><div class="t" style="left:0;width:22.2px;top:18px;text-align:center;font-size:10.5px;color:#333;transform:scaleX(0.72);transform-origin:center">70</div></div>
<div class="a" style="left:175.8px;top:600.5px;width:22.1px;height:28.8px;background:#f3f5f9;overflow:hidden"><div class="a" style="left:2.3px;top:2.2px;width:17.5px;height:17.5px;border-radius:50%;background:#000"></div><div class="a" style="left:0;top:17px;width:22.1px;height:11.8px;background:linear-gradient(#a0a0a0,#f3f5f9 40%,#f3f5f9 55%,#d4d7dc)"></div><div class="t" style="left:0;width:22.1px;top:18px;text-align:center;font-size:10.5px;color:#333;transform:scaleX(0.72);transform-origin:center">80</div></div>
<div class="a" style="left:198.9px;top:600.5px;width:22.1px;height:28.8px;background:#f3f5f9;overflow:hidden"><div class="a" style="left:2.3px;top:2.2px;width:17.5px;height:17.5px;border-radius:50%;background:#000"></div><div class="a" style="left:0;top:17px;width:22.1px;height:11.8px;background:linear-gradient(#a0a0a0,#f3f5f9 40%,#f3f5f9 55%,#d4d7dc)"></div><div class="t" style="left:0;width:22.1px;top:18px;text-align:center;font-size:10.5px;color:#333;transform:scaleX(0.72);transform-origin:center">100</div></div>
<div class="a" style="left:37.0px;top:630.2px;width:22.1px;height:28.8px;background:#f3f5f9;overflow:hidden"><div class="a" style="left:2.3px;top:2.2px;width:17.5px;height:17.5px;border-radius:50%;background:#000"></div><div class="a" style="left:0;top:17px;width:22.1px;height:11.8px;background:linear-gradient(#a0a0a0,#f3f5f9 40%,#f3f5f9 55%,#d4d7dc)"></div><div class="t" style="left:0;width:22.1px;top:18px;text-align:center;font-size:10.5px;color:#333;transform:scaleX(0.72);transform-origin:center">120</div></div>
<div class="a" style="left:60.1px;top:630.2px;width:22.1px;height:28.8px;background:#f3f5f9;overflow:hidden"><div class="a" style="left:2.3px;top:2.2px;width:17.5px;height:17.5px;border-radius:50%;background:#000"></div><div class="a" style="left:0;top:17px;width:22.1px;height:11.8px;background:linear-gradient(#a0a0a0,#f3f5f9 40%,#f3f5f9 55%,#d4d7dc)"></div><div class="t" style="left:0;width:22.1px;top:18px;text-align:center;font-size:10.5px;color:#333;transform:scaleX(0.72);transform-origin:center">150</div></div>
<div class="a" style="left:83.2px;top:630.2px;width:22.2px;height:28.8px;background:#f3f5f9;overflow:hidden"><div class="a" style="left:2.4px;top:2.2px;width:17.5px;height:17.5px;border-radius:50%;background:#000"></div><div class="a" style="left:0;top:17px;width:22.2px;height:11.8px;background:linear-gradient(#a0a0a0,#f3f5f9 40%,#f3f5f9 55%,#d4d7dc)"></div><div class="t" style="left:0;width:22.2px;top:18px;text-align:center;font-size:10.5px;color:#333;transform:scaleX(0.72);transform-origin:center">170</div></div>
<div class="a" style="left:106.4px;top:630.2px;width:22.1px;height:28.8px;background:#f3f5f9;overflow:hidden"><div class="a" style="left:2.3px;top:2.2px;width:17.5px;height:17.5px;border-radius:50%;background:#000"></div><div class="a" style="left:0;top:17px;width:22.1px;height:11.8px;background:linear-gradient(#a0a0a0,#f3f5f9 40%,#f3f5f9 55%,#d4d7dc)"></div><div class="t" style="left:0;width:22.1px;top:18px;text-align:center;font-size:10.5px;color:#333;transform:scaleX(0.72);transform-origin:center">200</div></div>
<div class="a" style="left:129.5px;top:630.2px;width:22.1px;height:28.8px;background:#f3f5f9;overflow:hidden"><div class="a" style="left:2.3px;top:2.2px;width:17.5px;height:17.5px;border-radius:50%;background:#000"></div><div class="a" style="left:0;top:17px;width:22.1px;height:11.8px;background:linear-gradient(#a0a0a0,#f3f5f9 40%,#f3f5f9 55%,#d4d7dc)"></div><div class="t" style="left:0;width:22.1px;top:18px;text-align:center;font-size:10.5px;color:#333;transform:scaleX(0.72);transform-origin:center">250</div></div>
<div class="a" style="left:152.6px;top:630.2px;width:22.2px;height:28.8px;background:#f3f5f9;overflow:hidden"><div class="a" style="left:2.4px;top:2.2px;width:17.5px;height:17.5px;border-radius:50%;background:#000"></div><div class="a" style="left:0;top:17px;width:22.2px;height:11.8px;background:linear-gradient(#a0a0a0,#f3f5f9 40%,#f3f5f9 55%,#d4d7dc)"></div><div class="t" style="left:0;width:22.2px;top:18px;text-align:center;font-size:10.5px;color:#333;transform:scaleX(0.72);transform-origin:center">300</div></div>
<div class="a" style="left:175.8px;top:630.2px;width:22.1px;height:28.8px;background:#f3f5f9;overflow:hidden"><div class="a" style="left:2.3px;top:2.2px;width:17.5px;height:17.5px;border-radius:50%;background:#000"></div><div class="a" style="left:0;top:17px;width:22.1px;height:11.8px;background:linear-gradient(#a0a0a0,#f3f5f9 40%,#f3f5f9 55%,#d4d7dc)"></div><div class="t" style="left:0;width:22.1px;top:18px;text-align:center;font-size:10.5px;color:#333;transform:scaleX(0.72);transform-origin:center">400</div></div>
<div class="a" style="left:198.9px;top:630.2px;width:22.1px;height:28.8px;background:#f3f5f9;overflow:hidden"><div class="a" style="left:2.3px;top:2.2px;width:17.5px;height:17.5px;border-radius:50%;background:#000"></div><div class="a" style="left:0;top:17px;width:22.1px;height:11.8px;background:linear-gradient(#a0a0a0,#f3f5f9 40%,#f3f5f9 55%,#d4d7dc)"></div><div class="t" style="left:0;width:22.1px;top:18px;text-align:center;font-size:10.5px;color:#333;transform:scaleX(0.72);transform-origin:center">500</div></div>
<div class="a" style="left:222px;top:540px;width:9px;height:119px;background:#d5d8dd"></div>
<div class="btn" style="left:222px;top:541px;width:8px;height:9px;background:#f6f7f9"></div>
<svg style="left:223.5px;top:543.5px" width="5" height="4" viewBox="0 0 5 4"><path d="M0,4 L2.5,0 L5,4Z" fill="#333"/></svg>
<div class="btn" style="left:222px;top:550px;width:8px;height:78px;background:#f4f6f9"></div>
<div class="a" style="left:224px;top:585px;width:4px;height:5px;background:repeating-linear-gradient(#888 0,#888 1px,transparent 1px,transparent 2px)"></div>
<div class="btn" style="left:222px;top:650px;width:8px;height:9px;background:#f6f7f9"></div>
<svg style="left:223.5px;top:653px" width="5" height="4" viewBox="0 0 5 4"><path d="M0,0 L2.5,4 L5,0Z" fill="#333"/></svg>
<div class="a" style="left:36px;top:659px;width:195px;height:17px;background:linear-gradient(#d0d2d6 0,#d0d2d6 1px,#e6e7ea 2px,#d9dbde)"></div>
<div class="mbtn" style="left:37px;top:663px"></div>
<div class="tab" style="left:51px;top:661px;width:61px;height:15px"></div>
<div class="a" style="left:54px;top:663px;width:12px;height:12px;border-radius:50%;background:conic-gradient(#f00,#ff0,#0f0,#0ff,#00f,#f0f,#f00)"></div>
<div class="a" style="left:57px;top:666px;width:6px;height:6px;border-radius:50%;background:#fff"></div>
<div class="t" style="left:70px;top:666px;font-size:7.5px;letter-spacing:-0.3px;color:#444">Color Wheel</div>
<div class="tabg" style="left:112px;top:662px;width:21px;height:13px"></div>
<svg style="left:114px;top:664px" width="17" height="11" viewBox="0 0 17 11"><path d="M2,2 L15,2 M2,5 L15,5 M2,8 L15,8" stroke="#aaa" stroke-width="1.5"/></svg>
<div class="tabg" style="left:134px;top:662px;width:21px;height:13px"></div>
<svg style="left:136px;top:664px" width="17" height="11" viewBox="0 0 17 11"><path d="M2,2 h4 v3 h-4z M8,2 h7 v3 h-7z M2,6 h4 v3 h-4z M8,6 h4 v3 h-4z" fill="#aaa"/></svg>
<div class="tabg" style="left:156px;top:662px;width:21px;height:13px"></div>
<svg style="left:158px;top:664px" width="17" height="11" viewBox="0 0 17 11"><rect x="2" y="1" width="5" height="4" fill="#aaa"/><rect x="9" y="1" width="5" height="4" fill="#aaa"/><rect x="2" y="6" width="5" height="4" fill="#aaa"/><rect x="9" y="6" width="5" height="4" fill="#aaa"/></svg>
<div class="tabg" style="left:177px;top:662px;width:21px;height:13px"></div>
<svg style="left:179px;top:664px" width="17" height="11" viewBox="0 0 17 11"><path d="M3,4 L3,10 L14,10 L14,3 L7,3 L6,2 L3,2Z" fill="#b0b0b0"/><rect x="6" y="5" width="8" height="5" fill="#999"/></svg>
<div class="tabg" style="left:198px;top:662px;width:21px;height:13px"></div>
<svg style="left:200px;top:664px" width="17" height="11" viewBox="0 0 17 11"><rect x="2.5" y="2.5" width="12" height="7" fill="none" stroke="#aaa" stroke-width="1.5"/></svg>
<div class="a pbg" style="left:36px;top:676px;width:188px;height:40px"></div>
<div class="a" style="left:224px;top:676px;width:7px;height:40px;background:#c4c8cd;border-left:1px solid #e0e2e6"></div>
<div class="a" style="left:47px;top:680px;width:22px;height:21px;background:#fff;border:1px solid #c0c0c0"></div>
<div class="a" style="left:37px;top:676px;width:21px;height:13px;background:#000;border:1px solid #5aa9e0;box-shadow:inset 0 0 0 1px #888"></div>
<div class="a" style="left:36px;top:703px;width:33px;height:10px;background-color:#fff;background-image:linear-gradient(45deg,#8c8c8c 25%,transparent 25%,transparent 75%,#8c8c8c 75%),linear-gradient(45deg,#8c8c8c 25%,transparent 25%,transparent 75%,#8c8c8c 75%);background-size:8px 8px;background-position:0 0,4px 4px;border:1px solid #ccc"></div>
<div class="a" style="left:121.5px;top:682px;width:18px;height:18px;border-radius:50%;background:conic-gradient(from 0deg,#f80,#ff0,#8f0,#0f0,#0f8,#0ff,#08f,#00f,#80f,#f0f,#f08,#f00,#f80)"></div>
<div class="a" style="left:129.5px;top:679px;width:2px;height:11px;background:#111"></div>
<div class="a" style="left:132px;top:705px;width:7px;height:7px;background:#1a2a5a;border:1px solid #6b7fa8"></div>
<div class="t" style="left:133.2px;top:706px;font-size:6px;font-weight:bold;color:#fff">H</div>
<div class="t" style="left:144px;top:702.5px;font-size:10.5px;color:#222;transform:scaleX(0.72);transform-origin:left">57</div>
<div class="a" style="left:156px;top:705px;width:7px;height:7px;background:#1a2a5a;border:1px solid #6b7fa8"></div>
<div class="t" style="left:157.2px;top:706px;font-size:6px;font-weight:bold;color:#fff">S</div>
<div class="t" style="left:166px;top:702.5px;font-size:10.5px;color:#222;transform:scaleX(0.72);transform-origin:left">100</div>
<div class="a" style="left:180px;top:705px;width:7px;height:7px;background:#1a2a5a;border:1px solid #6b7fa8"></div>
<div class="t" style="left:181.2px;top:706px;font-size:6px;font-weight:bold;color:#fff">V</div>
<div class="t" style="left:195px;top:702.5px;font-size:10.5px;color:#222;transform:scaleX(0.72);transform-origin:left">0</div>
<div class="a" style="left:209px;top:700px;width:12px;height:12px;border-radius:50%;background:conic-gradient(#f00,#ff0,#0f0,#0ff,#00f,#f0f,#f00)"></div>
<div class="a" style="left:211px;top:702px;width:8px;height:8px;border-radius:50%;background:#fff"></div>
<svg style="left:213px;top:703.5px" width="4" height="5" viewBox="0 0 4 5"><path d="M0,0 L4,2.5 L0,5Z" fill="#e05a20"/></svg>
<div class="a" style="left:4px;top:541px;width:31px;height:176px;background:#f2f5fa;border-left:1px solid #c9ccd1"></div>
<!-- CANVAS AREA -->
<div class="a" style="left:232px;top:35px;width:505px;height:19px;background:#f2f6fb;border-bottom:1px solid #d0d3d8"></div>
<div class="btn" style="left:234px;top:38px;width:31px;height:15px;background:linear-gradient(#f8f8f8,#e2e2e2);border-color:#c4c4c4"></div>
<svg style="left:242px;top:39px" width="15" height="13" viewBox="0 0 15 13"><path d="M7.5,6.5 C7.5,5.5 9,5.5 9,6.5 C9,8 6,8.5 5.5,6.5 C5,4 9,3 11,5 C13,7.5 10,11 7,10.5 C3,10 2,6 3.5,3.5 C5.5,0.5 11,0.8 13,3.5" fill="none" stroke="#555" stroke-width="1.6"/></svg>
<div class="a" style="left:269px;top:38px;width:1px;height:15px;background:#d4d7dc"></div>
<svg style="left:274px;top:38px" width="14" height="16" viewBox="0 0 14 16"><path d="M3,3 L9,3 L12.5,6.5 L12.5,15 L3,15Z" fill="#fff" stroke="#222" stroke-width="1.1"/><path d="M9,3 L9,6.5 L12.5,6.5" fill="none" stroke="#222"/><path d="M3,0.5 L3,5 M0.8,2.5 L5.2,2.5" stroke="#222" stroke-width="0.9"/></svg>
<svg style="left:291px;top:38px" width="16" height="16" viewBox="0 0 16 16"><path d="M1,6 L1,15 L13,15 L13,8 L6,8 L5,6Z" fill="#bbb" stroke="#333"/><path d="M1,15 L3,9 L15,9 L13,15Z" fill="#ddd" stroke="#333"/><path d="M8,5 C9,2 12,1.5 14,3.5 M14,3.5 L14,1 M14,3.5 L11.5,3.5" fill="none" stroke="#222" stroke-width="1.2"/></svg>
<svg style="left:310px;top:39px" width="15" height="15" viewBox="0 0 15 15"><rect x="1" y="1" width="13" height="13" fill="#333"/><rect x="3" y="2" width="9" height="7" fill="#fafafa"/><rect x="3" y="10" width="9" height="3" fill="#777"/></svg>
<div class="a" style="left:330px;top:38px;width:1px;height:15px;background:#d4d7dc"></div>
<svg style="left:335px;top:40px" width="14" height="12" viewBox="0 0 14 12"><path d="M4,3 L10,3 C12.5,3 13,4.5 13,6 C13,7.5 12,9 10,9 L2,9" fill="none" stroke="#222" stroke-width="2"/><path d="M5,0 L0.5,3 L5,6Z" fill="#222"/></svg>
<svg style="left:353px;top:40px" width="14" height="12" viewBox="0 0 14 12"><path d="M10,3 L4,3 C1.5,3 1,4.5 1,6 C1,7.5 2,9 4,9 L12,9" fill="none" stroke="#c4c6ca" stroke-width="2"/><path d="M9,0 L13.5,3 L9,6Z" fill="#c4c6ca"/></svg>
<div class="a" style="left:371px;top:38px;width:1px;height:15px;background:#d4d7dc"></div>
<svg style="left:376px;top:39px" width="14" height="14" viewBox="0 0 14 14"><g fill="#333"><circle cx="7" cy="1.8" r="1.5"/><circle cx="7" cy="12.2" r="1.5"/><circle cx="1.8" cy="7" r="1.5"/><circle cx="12.2" cy="7" r="1.5"/><circle cx="3.3" cy="3.3" r="1.3"/><circle cx="10.7" cy="3.3" r="1.3"/><circle cx="3.3" cy="10.7" r="1.3"/><circle cx="10.7" cy="10.7" r="1.3"/></g></svg>
<svg style="left:394px;top:39px" width="14" height="14" viewBox="0 0 14 14"><rect x="2.5" y="2.5" width="9" height="9" fill="none" stroke="#c8cacd" stroke-width="1.5" stroke-dasharray="2 1"/><g fill="#c8cacd"><rect x="0" y="0" width="3" height="3"/><rect x="11" y="0" width="3" height="3"/><rect x="0" y="11" width="3" height="3"/><rect x="11" y="11" width="3" height="3"/></g></svg>
<svg style="left:411px;top:38px" width="15" height="15" viewBox="0 0 15 15"><path d="M1,9 L7,4 L12,9 L7,14Z" fill="#fff" stroke="#222" stroke-width="1.3"/><path d="M5,7 L12,1 L14,3 L8,9Z" fill="#222"/><path d="M1,9 L3,12" stroke="#222" stroke-width="1.3"/></svg>
<svg style="left:429px;top:38px" width="15" height="15" viewBox="0 0 15 15"><path d="M3,3 L12,3 M3,12 L12,12 M3,3 L3,12 M12,3 L12,12" fill="none" stroke="#222" stroke-width="1.5"/><path d="M3,3 C5,6 10,6 12,3 C9,5 9,10 12,12 C10,9 5,9 3,12 C6,10 6,5 3,3Z" fill="#fff" stroke="#222" stroke-width="1.3"/><g fill="#222"><circle cx="2.5" cy="2.5" r="2.2"/><circle cx="12.5" cy="2.5" r="2.2"/><circle cx="2.5" cy="12.5" r="2.2"/><circle cx="12.5" cy="12.5" r="2.2"/></g></svg>
<div class="a" style="left:449px;top:38px;width:1px;height:15px;background:#d4d7dc"></div>
<svg style="left:455px;top:39px" width="13" height="13" viewBox="0 0 13 13"><rect x="1" y="3" width="9" height="9" fill="none" stroke="#c8cacd" stroke-dasharray="1.5 1"/><path d="M1,12 L12,1" stroke="#c4c6ca" stroke-width="1.4"/></svg>
<svg style="left:473px;top:39px" width="13" height="13" viewBox="0 0 13 13"><rect x="1" y="1" width="11" height="11" fill="none" stroke="#c8cacd" stroke-dasharray="1.5 1"/><path d="M1,12 L12,1 L12,12Z" fill="#c4c6ca"/></svg>
<svg style="left:491px;top:39px" width="13" height="13" viewBox="0 0 13 13"><rect x="0.5" y="0.5" width="12" height="12" fill="#e6e8ea" stroke="#d0d2d5"/><rect x="3" y="3" width="7" height="7" fill="#fff" stroke="#c4c6ca" stroke-dasharray="1.5 1"/></svg>
<div class="a" style="left:510px;top:38px;width:1px;height:15px;background:#d4d7dc"></div>
<svg style="left:514px;top:38px" width="14" height="16" viewBox="0 0 14 16"><path d="M10,1 L13,1 L13,14 L10,14Z" fill="#ddd" stroke="#333"/><path d="M1,4 L1,14 L11,14" fill="none" stroke="#1f9ae0" stroke-width="1.6"/><path d="M1,4 L11,14" stroke="#333" stroke-width="1.6"/></svg>
<svg style="left:532px;top:38px" width="14" height="16" viewBox="0 0 14 16"><path d="M10,1 L13,1 L13,14 L10,14Z" fill="#ddd" stroke="#333"/><path d="M1,14 C1,9 5,6 10,6 L10,14Z" fill="none" stroke="#333" stroke-width="1.4"/><path d="M10,11 L13,14" stroke="#1f9ae0" stroke-width="2"/></svg>
<svg style="left:550px;top:38px" width="15" height="16" viewBox="0 0 15 16"><path d="M1,5 L14,5 M1,11 L14,11 M4.5,1 L4.5,15 M10.5,1 L10.5,15" stroke="#1f9ae0" stroke-width="1.4"/><path d="M6,1 L9,1 L9,12 L7.5,14 L6,12Z" fill="#ccc" stroke="#333" stroke-width="1"/></svg>
<div class="a" style="left:569px;top:38px;width:1px;height:15px;background:#d4d7dc"></div>
<svg style="left:572px;top:39px" width="17" height="14" viewBox="0 0 17 14"><rect x="1.5" y="3.5" width="14" height="9" fill="#666" stroke="#333"/><rect x="3" y="5" width="11" height="3" fill="#eee"/><path d="M1.5,2 L1.5,0.5 L4,0.5 M13,0.5 L15.5,0.5 L15.5,2 M7,2 L8.5,0.5 L10,2" fill="none" stroke="#555"/></svg>
<svg style="left:592px;top:44px" width="7" height="5" viewBox="0 0 7 5"><path d="M0,0 L7,0 L3.5,4Z" fill="#333"/></svg>
<div class="a" style="left:604px;top:38px;width:1px;height:15px;background:#d4d7dc"></div>
<div class="a" style="left:609px;top:39px;width:14px;height:14px;border-radius:50%;background:#333"></div>
<div class="t" style="left:612.2px;top:40px;font-size:12px;font-weight:bold;color:#fff">?</div>
<!-- tab row -->
<div class="a" style="left:232px;top:54px;width:505px;height:17px;background:linear-gradient(#ececee,#e2e3e6);border-bottom:2px solid #c8cacd"></div>
<div class="a" style="left:233px;top:55px;width:72px;height:15px;background:linear-gradient(#f6f8fb,#eef1f5);border-right:1px solid #cfd2d6"></div>
<div class="t" style="left:236px;top:59px;font-size:8.5px;letter-spacing:-0.3px;color:#333">New canvas*</div>
<div class="a" style="left:297px;top:61px;width:5px;height:5px;border-radius:50%;background:#555"></div>
<div class="btn" style="left:728px;top:56px;width:8px;height:14px;background:#f4f5f7"></div>
<svg style="left:729.5px;top:62px" width="5" height="3" viewBox="0 0 5 3"><path d="M0,0 L5,0 L2.5,3Z" fill="#444"/></svg>
<!-- rulers -->
<div class="a" style="left:232px;top:72px;width:496px;height:11px;background:#fff;border-bottom:1px solid #888"></div>
<div class="a" style="left:232px;top:72px;width:12px;height:617px;background:#fff;border-right:1px solid #888"></div>
<div class="a" style="left:243px;top:72px;width:1px;height:11px;background:#888"></div>
<div class="a" style="left:250px;top:72px;width:1px;height:11px;background:#666"></div>
<div class="t" style="left:253px;top:75px;font-size:8.5px;color:#777;transform:scaleX(0.8);transform-origin:left">0</div>
<div class="a" style="left:295px;top:72px;width:1px;height:11px;background:#666"></div>
<div class="a" style="left:331px;top:80px;width:1px;height:2px;background:#666"></div>
<div class="a" style="left:412px;top:80px;width:1px;height:2px;background:#666"></div>
<div class="a" style="left:493px;top:80px;width:1px;height:2px;background:#666"></div>
<div class="a" style="left:574px;top:80px;width:1px;height:2px;background:#666"></div>
<div class="a" style="left:655px;top:79px;width:1px;height:3px;background:#666"></div>
<div class="a" style="left:236px;top:188px;width:6px;height:4px;border:1px solid #888;border-radius:2px"></div>
<div class="a" style="left:233px;top:186px;width:10px;height:1px;background:#888"></div>
<div class="a" style="left:233px;top:228.5px;width:10px;height:1px;background:#888"></div>
<div class="a" style="left:240px;top:107px;width:3px;height:1px;background:#777"></div>
<div class="a" style="left:240px;top:267px;width:3px;height:1px;background:#777"></div>
<div class="a" style="left:240px;top:348px;width:3px;height:1px;background:#777"></div>
<div class="a" style="left:240px;top:429px;width:3px;height:1px;background:#777"></div>
<div class="a" style="left:240px;top:510px;width:3px;height:1px;background:#777"></div>
<div class="a" style="left:240px;top:591px;width:3px;height:1px;background:#777"></div>
<div class="a" style="left:240px;top:671px;width:3px;height:1px;background:#777"></div>
<!-- gray canvas -->
<div class="a" style="left:244px;top:83px;width:484px;height:606px;background:#c9c9c9"></div>
<div class="a" style="left:250px;top:185px;width:472px;height:320px;background:#fff"></div>
<!-- v scrollbar -->
<div class="a" style="left:728px;top:72px;width:9px;height:617px;background:#d9dce1;border-left:1px solid #c8cbd0"></div>
<div class="btn" style="left:728px;top:73px;width:9px;height:9px;background:#f6f7f9"></div>
<svg style="left:730px;top:76px" width="5" height="3" viewBox="0 0 5 3"><path d="M0,3 L2.5,0 L5,3Z" fill="#444"/></svg>
<div class="btn" style="left:728px;top:254px;width:8px;height:292px;background:linear-gradient(90deg,#f6f7fa,#eceef2)"></div>
<div class="a" style="left:731px;top:397px;width:4px;height:5px;background:repeating-linear-gradient(#888 0,#888 1px,transparent 1px,transparent 2px)"></div>
<div class="btn" style="left:728px;top:680px;width:9px;height:9px;background:#f6f7f9"></div>
<svg style="left:730px;top:683.5px" width="5" height="3" viewBox="0 0 5 3"><path d="M0,0 L5,0 L2.5,3Z" fill="#444"/></svg>
<!-- status bar -->
<div class="a" style="left:232px;top:689px;width:496px;height:9px;background:#f2f5fa"></div>
<div class="t" style="left:233px;top:688.5px;font-size:10.5px;letter-spacing:-0.3px;color:#111;transform:scaleX(0.75);transform-origin:left">150.0</div>
<svg style="left:251px;top:689px" width="57" height="9" viewBox="0 0 57 9"><path d="M0,9 L28,1 L28,9Z" fill="#a8abaf"/><path d="M29,9 L56,1 L56,9Z" fill="#a8abaf"/><rect x="27.5" y="0" width="1.5" height="9" fill="#dde0e4"/><path d="M29,0 L56,0 L56,1 L29,9Z" fill="#fff"/></svg>
<svg style="left:310.5px;top:688.5px" width="12" height="10" viewBox="0 0 12 10"><circle cx="5" cy="4.5" r="3.7" fill="#fff" stroke="#555" stroke-width="1.2"/><path d="M3,4.5 L7,4.5" stroke="#333"/><path d="M7.5,7 L10,9.5" stroke="#333" stroke-width="1.5"/></svg>
<svg style="left:325.5px;top:688.5px" width="12" height="10" viewBox="0 0 12 10"><circle cx="5" cy="4.5" r="3.7" fill="#fff" stroke="#555" stroke-width="1.2"/><path d="M3,4.5 L7,4.5 M5,2.5 L5,6.5" stroke="#333"/><path d="M7.5,7 L10,9.5" stroke="#333" stroke-width="1.5"/></svg>
<div class="a" style="left:340px;top:689px;width:9px;height:9px;background:#222;border:1.5px solid #222;box-shadow:inset 0 0 0 1px #aaa"></div>
<div class="a" style="left:354px;top:689px;width:36px;height:9px;background:#fff"></div>
<svg style="left:354px;top:689px" width="36" height="9" viewBox="0 0 36 9"><path d="M0,9 L0,0 L4,0 C10,8 26,8 32,0 L36,0 L36,9Z" fill="#aeb1b5"/></svg>
<div class="t" style="left:355px;top:688.5px;font-size:10.5px;letter-spacing:-0.3px;color:#111;transform:scaleX(0.75);transform-origin:left">0.0</div>
<svg style="left:392px;top:689px" width="36" height="9" viewBox="0 0 36 9"><rect width="36" height="9" fill="#fff"/><path d="M0,9 L3,0 L33,0 L36,9Z" fill="#a0a3a7"/><path d="M3,0 L10,0 L3,9Z M26,0 L33,0 L33,9Z" fill="#fff"/></svg>
<svg style="left:430px;top:689px" width="10" height="10" viewBox="0 0 10 10"><path d="M2.5,8 C0.5,5 2,1.2 5.5,1.2 C8.5,1.2 9.5,4 8.5,6.5" fill="none" stroke="#222" stroke-width="1.6"/><path d="M0,5.5 L2.5,9.5 L5,5.5Z" fill="#222"/></svg>
<svg style="left:445px;top:689px" width="10" height="10" viewBox="0 0 10 10"><path d="M7.5,8 C9.5,5 8,1.2 4.5,1.2 C1.5,1.2 0.5,4 1.5,6.5" fill="none" stroke="#222" stroke-width="1.6"/><path d="M10,5.5 L7.5,9.5 L5,5.5Z" fill="#222"/></svg>
<svg style="left:460px;top:689px" width="10" height="10" viewBox="0 0 10 10"><circle cx="5" cy="5" r="3.6" fill="none" stroke="#666" stroke-width="1.2" stroke-dasharray="1.5 1"/></svg>
<div class="btn" style="left:473px;top:689px;width:8px;height:9px;background:#f4f5f7"></div>
<svg style="left:475.5px;top:691px" width="3" height="5" viewBox="0 0 3 5"><path d="M3,0 L0,2.5 L3,5Z" fill="#444"/></svg>
<div class="a" style="left:482px;top:689px;width:238px;height:9px;background:#d8dbe0"></div>
<div class="btn" style="left:552px;top:689px;width:95px;height:8px;background:linear-gradient(#f8f9fb,#eceef2)"></div>
<div class="a" style="left:597px;top:691px;width:5px;height:4px;background:repeating-linear-gradient(90deg,#777 0,#777 1px,transparent 1px,transparent 2px)"></div>
<div class="btn" style="left:720px;top:689px;width:8px;height:9px;background:#f4f5f7"></div>
<svg style="left:723px;top:691px" width="3" height="5" viewBox="0 0 3 5"><path d="M0,0 L3,2.5 L0,5Z" fill="#444"/></svg>
<div class="a" style="left:728px;top:689px;width:9px;height:9px;background:#f2f5fa;border:1px solid #d4d7dc"></div>
<!-- timeline -->
<div class="a" style="left:232px;top:698px;width:505px;height:18px;background:linear-gradient(#e4e5e8,#dadbde);border-top:1px solid #ccced2"></div>
<div class="mbtn" style="left:234px;top:700px;height:13px"></div>
<div class="tab" style="left:248px;top:700px;width:49px;height:14px"></div>
<svg style="left:251px;top:702px" width="13" height="10" viewBox="0 0 13 10"><rect x="0.5" y="0.5" width="12" height="9" fill="#ddd" stroke="#555"/><path d="M3,1 L3,9 M5,1 L5,9 M7,1 L7,9 M9,1 L9,9" stroke="#888" stroke-width="0.8"/><rect x="10" y="3" width="1.5" height="1.5" fill="#2a7fd4"/><rect x="10" y="6" width="1.5" height="1.5" fill="#2a7fd4"/></svg>
<div class="t" style="left:267px;top:703px;font-size:8px;letter-spacing:-0.3px;color:#444">Timeline</div>
<div class="a" style="left:232px;top:713px;width:490px;height:3px;background:#f2f5fa"></div>
<div class="a" style="left:722px;top:699px;width:15px;height:17px;background:linear-gradient(#e8e9ec,#d8dadd);border-left:1px solid #cfd2d6"></div>
<svg style="left:724px;top:707px" width="10" height="5" viewBox="0 0 10 5"><path d="M0.5,4.5 L5,0.8 L9.5,4.5" fill="none" stroke="#8a8c90" stroke-width="1.6"/></svg>
<!-- ARTWORK -->
<svg style="left:0;top:0" width="960" height="720" viewBox="0 0 960 720">
<path d="M249.5,185 L270,185 C274,190 278,196 278.5,202 C278.5,208 274,213 268,212.5 C263,212 258,207 253,201 L249.5,198Z" fill="#000"/>
<path d="M722,505 L722,483 C716,480 711,477 705,476 C699,476 694,479 694,484 C694,490 700,497 708,505Z" fill="#000"/>
<g fill="#000">
<path d="M541.9,267.2 L543.7,266.4 L544.9,265.8 L547.3,263.2 L548.7,263.0 L551.0,264.0 L553.0,262.8 L554.7,262.1 L557.4,261.8 L559.2,261.3 L560.6,261.3 L563.1,261.2 L564.5,259.9 L567.0,261.1 L569.5,260.6 L571.5,260.4 L573.5,259.6 L575.6,259.5 L576.8,260.4 L579.0,258.6 L581.2,260.3 L583.4,259.4 L585.8,259.0 L588.2,258.5 L590.8,258.9 L593.1,259.0 L595.5,259.3 L596.7,258.8 L599.6,259.2 L601.2,259.3 L602.9,258.8 L605.4,259.1 L606.9,257.8 L609.9,259.1 L611.8,257.4 L613.3,258.3 L616.0,258.2 L617.3,259.6 L619.4,259.2 L621.8,259.6 L624.8,260.3 L627.2,259.9 L628.7,259.9 L631.0,261.0 L633.7,260.5 L635.7,261.8 L638.6,261.0 L641.0,262.0 L642.6,263.8 L645.0,263.3 L647.4,264.4 L649.6,264.8 L651.8,266.4 L654.3,265.9 L656.1,266.1 L658.3,268.6 L659.7,268.3 L662.2,268.7 L664.2,268.5 L665.6,270.7 L668.2,271.6 L670.4,272.7 L673.0,273.8 L674.6,273.2 L677.5,276.2 L679.0,276.7 L680.8,279.1 L682.6,280.5 L684.6,282.5 L685.3,284.6 L685.9,288.0 L686.5,288.0 L684.1,286.9 L682.5,286.7 L679.8,286.8 L678.2,286.0 L675.8,286.2 L674.2,286.3 L672.2,285.6 L669.6,286.3 L668.1,285.8 L665.4,285.0 L663.5,285.0 L661.5,286.0 L658.7,284.9 L657.0,285.4 L654.8,284.7 L651.9,284.5 L650.3,284.3 L647.8,284.4 L645.8,284.3 L644.2,283.7 L641.2,285.0 L640.0,284.9 L637.5,284.7 L635.8,283.3 L633.4,284.2 L631.1,283.5 L628.5,283.0 L626.2,282.4 L624.3,282.7 L622.3,282.1 L620.3,283.1 L618.2,283.3 L616.1,282.6 L613.1,282.7 L611.2,281.8 L609.6,282.0 L607.3,282.9 L605.4,281.9 L603.0,282.9 L601.1,282.9 L599.0,281.9 L597.1,283.1 L594.7,283.1 L593.1,283.4 L590.8,282.1 L588.3,283.9 L585.4,283.1 L583.4,283.7 L581.2,283.9 L579.3,283.3 L576.3,283.9 L574.1,284.1 L572.7,285.9 L569.6,285.6 L567.3,285.9 L564.9,287.2 L562.6,287.3 L560.1,287.5 L557.9,288.1 L556.4,288.0 L553.7,287.8 L551.9,288.8 L550.2,288.6 L548.2,289.3 L545.8,289.0 L543.8,289.9 L542.6,287.1 L541.5,283.6 L541.4,282.5 L540.8,280.0 L541.1,278.8 L541.4,275.9Z"/>
<rect x="546.5" y="285.0" width="0.6" height="0.6"/><rect x="540.0" y="269.0" width="0.9" height="0.9"/><rect x="542.9" y="287.3" width="0.9" height="0.9"/><rect x="543.0" y="283.6" width="0.8" height="0.8"/><rect x="534.5" y="280.1" width="0.5" height="0.5"/><rect x="535.2" y="284.6" width="0.5" height="0.5"/><rect x="534.4" y="268.4" width="0.9" height="0.9"/><rect x="535.7" y="266.6" width="0.9" height="0.9"/><rect x="534.8" y="286.3" width="0.8" height="0.8"/><rect x="545.5" y="288.9" width="0.8" height="0.8"/><rect x="545.0" y="266.9" width="0.9" height="0.9"/><rect x="540.7" y="283.2" width="0.6" height="0.6"/><rect x="544.2" y="288.4" width="0.5" height="0.5"/><rect x="537.9" y="279.5" width="0.9" height="0.9"/><rect x="536.6" y="270.3" width="0.6" height="0.6"/><rect x="647.7" y="262.7" width="1.0" height="1.0"/><rect x="653.5" y="263.3" width="0.6" height="0.6"/><rect x="653.6" y="262.9" width="0.7" height="0.7"/><rect x="679.6" y="276.6" width="0.7" height="0.7"/><rect x="579.3" y="258.2" width="0.7" height="0.7"/><rect x="681.3" y="276.1" width="0.9" height="0.9"/><rect x="574.0" y="258.3" width="0.8" height="0.8"/><rect x="625.8" y="256.8" width="0.8" height="0.8"/><rect x="619.2" y="256.6" width="0.8" height="0.8"/><rect x="610.7" y="255.8" width="0.6" height="0.6"/><rect x="643.0" y="261.7" width="0.6" height="0.6"/><rect x="669.1" y="269.9" width="1.0" height="1.0"/><rect x="669.3" y="270.0" width="0.8" height="0.8"/><rect x="547.9" y="262.5" width="0.9" height="0.9"/><rect x="651.0" y="262.3" width="0.5" height="0.5"/><rect x="601.8" y="255.7" width="0.9" height="0.9"/><rect x="558.4" y="258.7" width="0.6" height="0.6"/><rect x="589.0" y="256.3" width="0.8" height="0.8"/><rect x="548.0" y="260.9" width="0.9" height="0.9"/><rect x="622.7" y="258.3" width="0.9" height="0.9"/><rect x="572.4" y="258.9" width="0.6" height="0.6"/><rect x="637.0" y="259.8" width="0.7" height="0.7"/><rect x="546.7" y="262.8" width="0.7" height="0.7"/><rect x="596.0" y="256.3" width="0.7" height="0.7"/><rect x="571.6" y="257.9" width="0.6" height="0.6"/>
<g fill="#fff"><rect x="659.8" y="269.0" width="1" height="1"/><rect x="609.1" y="259.7" width="1" height="1"/><rect x="640.0" y="265.7" width="1" height="1"/><rect x="662.8" y="270.9" width="1" height="1"/><rect x="611.2" y="259.7" width="1" height="1"/><rect x="631.6" y="263.9" width="1" height="1"/><rect x="569.1" y="263.2" width="1" height="1"/><rect x="555.7" y="265.1" width="1" height="1"/><rect x="589.1" y="261.9" width="1" height="1"/><rect x="580.8" y="261.1" width="1" height="1"/><rect x="665.8" y="271.1" width="1" height="1"/><rect x="577.8" y="263.4" width="1" height="1"/><rect x="654.6" y="268.9" width="1" height="1"/><rect x="665.2" y="272.2" width="1" height="1"/><rect x="555.7" y="263.0" width="1" height="1"/><rect x="687.4" y="290.1" width="1" height="1"/><rect x="635.1" y="263.0" width="1" height="1"/><rect x="551.2" y="265.8" width="1" height="1"/><rect x="677.8" y="277.7" width="1" height="1"/><rect x="678.3" y="279.5" width="1" height="1"/><rect x="650.8" y="267.2" width="1" height="1"/><rect x="558.4" y="263.7" width="1" height="1"/><rect x="569.4" y="261.7" width="1" height="1"/><rect x="570.7" y="262.9" width="1" height="1"/><rect x="567.8" y="261.8" width="1" height="1"/></g>
<!-- eye main -->
<path d="M553.8,362.2 Q549.5,364.0 552.2,360.2 Q555.0,356.5 558.0,353.0 Q561.0,349.5 564.6,345.7 Q568.3,341.9 571.8,339.2 Q575.4,336.6 580.7,333.3 Q586.0,330.0 594.0,329.3 Q602.0,328.6 610.9,329.1 Q619.7,329.5 628.5,329.4 Q637.4,329.2 643.6,328.4 Q649.8,327.7 656.9,328.9 Q664.0,330.0 672.9,334.1 Q681.7,338.3 687.9,342.8 Q694.0,347.2 697.1,351.1 Q700.3,355.0 700.9,358.8 Q701.5,362.5 698.8,365.4 Q696.0,368.4 690.0,371.7 Q684.0,375.0 678.0,378.5 Q672.0,382.0 666.0,385.0 Q660.0,388.0 652.5,389.8 Q645.0,391.5 637.5,391.8 Q630.0,392.0 623.0,391.0 Q616.0,390.0 614.0,386.8 Q612.0,383.5 620.0,383.0 Q628.0,382.5 636.5,381.5 Q645.0,380.5 651.0,378.5 Q657.0,376.5 658.2,373.2 Q659.5,370.0 658.2,364.0 Q657.0,358.0 655.1,351.7 Q653.3,345.4 651.6,345.4 Q650.0,345.5 648.2,347.2 Q646.5,349.0 645.8,353.0 Q645.0,357.0 642.1,361.9 Q639.2,366.7 633.9,369.6 Q628.5,372.5 621.5,373.8 Q614.4,375.0 607.3,373.9 Q600.2,372.9 595.8,369.8 Q591.4,366.7 589.2,360.5 Q587.0,354.3 586.5,349.9 Q586.0,345.5 584.0,346.0 Q582.0,346.5 578.7,348.2 Q575.4,350.0 570.7,352.8 Q566.0,355.5 562.0,358.0 Q558.0,360.5 553.8,362.2 Z"/>
<path d="M593.4,330.7 L590.6,324.1 L590.6,331.3Z"/><path d="M597.7,330.5 L596.3,322.9 L596.0,330.6Z"/><path d="M602.0,330.4 L601.5,319.1 L599.0,330.1Z"/><path d="M604.5,330.0 L602.3,322.3 L602.1,330.3Z"/><path d="M608.2,330.1 L604.9,323.0 L606.3,330.7Z"/><path d="M613.4,330.8 L613.1,323.4 L610.6,330.4Z"/><path d="M615.7,330.8 L615.7,323.8 L614.1,330.7Z"/><path d="M621.1,330.9 L619.3,323.3 L618.0,331.0Z"/><path d="M625.5,331.0 L625.2,317.3 L623.0,330.8Z"/><path d="M629.8,331.0 L629.6,317.4 L627.1,330.7Z"/><path d="M634.3,331.3 L637.5,323.5 L632.4,330.2Z"/><path d="M637.3,330.9 L637.3,324.3 L635.2,330.6Z"/><path d="M641.3,330.5 L641.9,319.0 L639.2,330.2Z"/><path d="M644.4,330.6 L649.2,321.9 L642.7,329.3Z"/><path d="M648.5,330.4 L650.9,324.2 L645.9,328.6Z"/><path d="M650.4,329.7 L657.7,319.2 L649.2,328.7Z"/><path d="M655.0,330.3 L659.6,320.7 L653.6,329.5Z"/><path d="M657.7,330.8 L660.4,323.4 L656.0,329.9Z"/><path d="M661.9,331.9 L667.4,326.3 L660.6,330.2Z"/><path d="M665.3,332.4 L669.5,326.6 L664.0,331.2Z"/><path d="M557,339 C566,332.5 577,327.5 591,323.5 L592.5,325.5 C580,330 569,335 561,341.5Z"/><path d="M560.7,337.4 L557.7,331.6 L559.3,337.9Z"/><path d="M566.6,334.3 L562.9,331.8 L565.0,335.7Z"/><path d="M572.4,331.8 L567.8,326.9 L570.7,333.0Z"/><path d="M576.1,330.2 L573.4,327.6 L574.9,331.1Z"/><path d="M579.7,328.8 L576.1,322.7 L578.2,329.4Z"/><path d="M583.0,327.4 L580.8,322.7 L581.2,327.9Z"/><path d="M586.7,325.6 L583.0,320.4 L585.0,326.5Z"/><path d="M590.6,323.6 L585.5,319.3 L589.6,324.6Z"/><rect x="587.6" y="326.9" width="1.4" height="1.4"/><rect x="590.6" y="324.9" width="1.4" height="1.4"/><rect x="567.9" y="338.0" width="0.9" height="0.9"/><rect x="587.8" y="326.3" width="1.2" height="1.2"/><rect x="592.0" y="324.0" width="1.6" height="1.6"/><rect x="577.2" y="331.2" width="1.4" height="1.4"/><rect x="577.9" y="331.5" width="1.1" height="1.1"/><rect x="569.0" y="337.4" width="1.6" height="1.6"/><path d="M582.9,377.3 L582.0,381.7" stroke="#000" stroke-width="0.9"/><path d="M585.7,378.9 L584.6,384.3" stroke="#000" stroke-width="1.3"/><path d="M590.9,380.0 L589.2,384.7" stroke="#000" stroke-width="1.1"/><path d="M595.0,380.5 L593.5,384.6" stroke="#000" stroke-width="1.2"/><path d="M598.4,383.1 L597.0,387.8" stroke="#000" stroke-width="0.9"/><path d="M603.1,383.0 L601.9,387.9" stroke="#000" stroke-width="1.3"/><path d="M607.5,385.4 L606.3,389.2" stroke="#000" stroke-width="1.3"/><path d="M612.1,385.8 L609.9,390.9" stroke="#000" stroke-width="1.2"/><path d="M615.0,389.0 L614.9,394.9" stroke="#000" stroke-width="1.2"/><path d="M617.3,389.0 L615.8,394.2" stroke="#000" stroke-width="1.2"/><path d="M622.4,389.0 L621.9,394.1" stroke="#000" stroke-width="1.0"/><path d="M626.6,389.0 L626.4,393.7" stroke="#000" stroke-width="1.2"/><path d="M630.2,389.0 L630.3,394.3" stroke="#000" stroke-width="1.3"/><path d="M633.1,389.0 L633.6,392.4" stroke="#000" stroke-width="1.3"/><path d="M637.4,389.0 L637.8,394.0" stroke="#000" stroke-width="0.9"/><path d="M641.9,389.0 L643.5,392.2" stroke="#000" stroke-width="1.0"/><path d="M645.6,389.0 L647.0,392.2" stroke="#000" stroke-width="0.9"/><path d="M649.9,389.0 L650.6,393.1" stroke="#000" stroke-width="1.3"/><path d="M653.5,387.4 L656.8,391.8" stroke="#000" stroke-width="1.1"/><path d="M657.6,385.6 L659.7,389.0" stroke="#000" stroke-width="1.4"/><path d="M661.7,383.7 L662.4,386.7" stroke="#000" stroke-width="1.0"/><path d="M666.1,381.8 L667.2,385.6" stroke="#000" stroke-width="1.5"/><path d="M670.6,379.7 L671.4,383.9" stroke="#000" stroke-width="1.3"/><path d="M673.7,378.3 L674.8,381.5" stroke="#000" stroke-width="1.2"/>
</g>
<path d="M598.4,343.5 l3.5,-0.3 l2,-2.2 l2.2,2 l4.2,-0.6 l-1.5,3 l1.2,2.5 l-3.5,-0.3 l-2,1.8 l-2.2,-2 l-3.7,0.3 l1.2,-2.5Z" fill="#fff"/>
<path d="M606,330.5 C615,329.5 625,330 632,331.5" stroke="#777" stroke-width="0.8" fill="none"/>
</svg>
<!-- RIGHT -->
<div class="a" style="left:737px;top:35px;width:221px;height:682px;background:#dfe1e5;border-left:1px solid #c9cbce"></div>
<div class="a" style="left:738px;top:36px;width:218px;height:15px;background:linear-gradient(#e6e6e7,#d9dadc)"></div>
<div class="a" style="left:766px;top:36px;width:2px;height:15px;background:#eef0f2;border-left:1px solid #c9cbce"></div>
<svg style="left:739px;top:40px" width="9" height="9" viewBox="0 0 9 9"><path d="M1,0.5 L4,4.5 L1,8.5 M5,0.5 L8,4.5 L5,8.5" fill="none" stroke="#8c8e92" stroke-width="1.6"/></svg>
<svg style="left:758px;top:40px" width="5" height="9" viewBox="0 0 5 9"><path d="M4,0.5 L1,4.5 L4,8.5" fill="none" stroke="#8c8e92" stroke-width="1.6"/></svg>
<svg style="left:768px;top:40px" width="9" height="9" viewBox="0 0 9 9"><path d="M1,0.5 L4,4.5 L1,8.5 M5,0.5 L8,4.5 L5,8.5" fill="none" stroke="#8c8e92" stroke-width="1.6"/></svg>
<div class="a" style="left:738px;top:51px;width:29px;height:666px;background:#e6e8eb"></div>
<div class="btn" style="left:739px;top:52.5px;width:26px;height:30px;background:#f2f5fa;border-color:#c7cacf"></div>
<svg style="left:739px;top:52.5px" width="26" height="30" viewBox="0 0 26 30"><defs><linearGradient id="fg0" x1="0" y1="0" x2="1" y2="0"><stop offset="0" stop-color="#555"/><stop offset="0.5" stop-color="#8a8a8a"/><stop offset="1" stop-color="#e0e0e0" stop-opacity="0.3"/></linearGradient><linearGradient id="fh0" x1="0" y1="0" x2="1" y2="1"><stop offset="0" stop-color="#c8c8c8"/><stop offset="1" stop-color="#f2f5fa"/></linearGradient></defs><path d="M4,18.5 L4,9.5 C4,7.8 5,7 6.8,7 L9,7 C10,7 10.6,7.8 11.2,9.3 L17,9.3 L17,13 L9.5,13Z" fill="url(#fh0)"/><path d="M4,18.5 L4,9.5 C4,7.8 5,7 6.8,7 L9,7 C10,7 10.6,7.8 11.2,9.3 L17.5,9.3" fill="none" stroke="url(#fg0)" stroke-width="1.4"/><path d="M4.3,18.5 L9.5,12.8 L16,12.8" fill="none" stroke="#bbb" stroke-width="0.9"/><g transform="translate(-2,-1.5)"><rect x="13" y="14" width="10" height="10" fill="#5bb8ea"/><path d="M13,14 L23,24 M23,14 L13,24" stroke="#f6e3a0" stroke-width="2.2"/></g></svg>
<div class="btn" style="left:739px;top:85.5px;width:26px;height:30px;background:#f2f5fa;border-color:#c7cacf"></div>
<svg style="left:739px;top:85.5px" width="26" height="30" viewBox="0 0 26 30"><defs><linearGradient id="fg1" x1="0" y1="0" x2="1" y2="0"><stop offset="0" stop-color="#555"/><stop offset="0.5" stop-color="#8a8a8a"/><stop offset="1" stop-color="#e0e0e0" stop-opacity="0.3"/></linearGradient><linearGradient id="fh1" x1="0" y1="0" x2="1" y2="1"><stop offset="0" stop-color="#c8c8c8"/><stop offset="1" stop-color="#f2f5fa"/></linearGradient></defs><path d="M4,18.5 L4,9.5 C4,7.8 5,7 6.8,7 L9,7 C10,7 10.6,7.8 11.2,9.3 L17,9.3 L17,13 L9.5,13Z" fill="url(#fh1)"/><path d="M4,18.5 L4,9.5 C4,7.8 5,7 6.8,7 L9,7 C10,7 10.6,7.8 11.2,9.3 L17.5,9.3" fill="none" stroke="url(#fg1)" stroke-width="1.4"/><path d="M4.3,18.5 L9.5,12.8 L16,12.8" fill="none" stroke="#bbb" stroke-width="0.9"/><g transform="translate(-2,-1.5)"><rect x="13.5" y="14.5" width="9" height="9" fill="#fff" stroke="#222"/><path d="M15,22 C16,18 19,17 21,17 L21,22Z" fill="#444"/></g></svg>
<div class="btn" style="left:739px;top:118.5px;width:26px;height:30px;background:#f2f5fa;border-color:#c7cacf"></div>
<svg style="left:739px;top:118.5px" width="26" height="30" viewBox="0 0 26 30"><defs><linearGradient id="fg2" x1="0" y1="0" x2="1" y2="0"><stop offset="0" stop-color="#555"/><stop offset="0.5" stop-color="#8a8a8a"/><stop offset="1" stop-color="#e0e0e0" stop-opacity="0.3"/></linearGradient><linearGradient id="fh2" x1="0" y1="0" x2="1" y2="1"><stop offset="0" stop-color="#c8c8c8"/><stop offset="1" stop-color="#f2f5fa"/></linearGradient></defs><path d="M4,18.5 L4,9.5 C4,7.8 5,7 6.8,7 L9,7 C10,7 10.6,7.8 11.2,9.3 L17,9.3 L17,13 L9.5,13Z" fill="url(#fh2)"/><path d="M4,18.5 L4,9.5 C4,7.8 5,7 6.8,7 L9,7 C10,7 10.6,7.8 11.2,9.3 L17.5,9.3" fill="none" stroke="url(#fg2)" stroke-width="1.4"/><path d="M4.3,18.5 L9.5,12.8 L16,12.8" fill="none" stroke="#bbb" stroke-width="0.9"/><g transform="translate(-2,-1.5)"><path d="M13,14 L23,24 M23,14 L13,24" stroke="#8a8a8a" stroke-width="3" stroke-linecap="round"/></g></svg>
<div class="btn" style="left:739px;top:151.5px;width:26px;height:30px;background:#f2f5fa;border-color:#c7cacf"></div>
<svg style="left:739px;top:151.5px" width="26" height="30" viewBox="0 0 26 30"><defs><linearGradient id="fg3" x1="0" y1="0" x2="1" y2="0"><stop offset="0" stop-color="#555"/><stop offset="0.5" stop-color="#8a8a8a"/><stop offset="1" stop-color="#e0e0e0" stop-opacity="0.3"/></linearGradient><linearGradient id="fh3" x1="0" y1="0" x2="1" y2="1"><stop offset="0" stop-color="#c8c8c8"/><stop offset="1" stop-color="#f2f5fa"/></linearGradient></defs><path d="M4,18.5 L4,9.5 C4,7.8 5,7 6.8,7 L9,7 C10,7 10.6,7.8 11.2,9.3 L17,9.3 L17,13 L9.5,13Z" fill="url(#fh3)"/><path d="M4,18.5 L4,9.5 C4,7.8 5,7 6.8,7 L9,7 C10,7 10.6,7.8 11.2,9.3 L17.5,9.3" fill="none" stroke="url(#fg3)" stroke-width="1.4"/><path d="M4.3,18.5 L9.5,12.8 L16,12.8" fill="none" stroke="#bbb" stroke-width="0.9"/><g transform="translate(-2,-1.5)"><g fill="#333"><rect x="13.0" y="14.0" width="1.8" height="1.8"/><rect x="13.0" y="17.6" width="1.8" height="1.8"/><rect x="13.0" y="21.2" width="1.8" height="1.8"/><rect x="14.8" y="15.8" width="1.8" height="1.8"/><rect x="14.8" y="19.4" width="1.8" height="1.8"/><rect x="14.8" y="23.0" width="1.8" height="1.8"/><rect x="16.6" y="14.0" width="1.8" height="1.8"/><rect x="16.6" y="17.6" width="1.8" height="1.8"/><rect x="16.6" y="21.2" width="1.8" height="1.8"/><rect x="18.4" y="15.8" width="1.8" height="1.8"/><rect x="18.4" y="19.4" width="1.8" height="1.8"/><rect x="18.4" y="23.0" width="1.8" height="1.8"/><rect x="20.2" y="14.0" width="1.8" height="1.8"/><rect x="20.2" y="17.6" width="1.8" height="1.8"/><rect x="20.2" y="21.2" width="1.8" height="1.8"/><rect x="22.0" y="15.8" width="1.8" height="1.8"/><rect x="22.0" y="19.4" width="1.8" height="1.8"/><rect x="22.0" y="23.0" width="1.8" height="1.8"/></g></g></svg>
<div class="btn" style="left:739px;top:184.5px;width:26px;height:30px;background:#f2f5fa;border-color:#c7cacf"></div>
<svg style="left:739px;top:184.5px" width="26" height="30" viewBox="0 0 26 30"><defs><linearGradient id="fg4" x1="0" y1="0" x2="1" y2="0"><stop offset="0" stop-color="#555"/><stop offset="0.5" stop-color="#8a8a8a"/><stop offset="1" stop-color="#e0e0e0" stop-opacity="0.3"/></linearGradient><linearGradient id="fh4" x1="0" y1="0" x2="1" y2="1"><stop offset="0" stop-color="#c8c8c8"/><stop offset="1" stop-color="#f2f5fa"/></linearGradient></defs><path d="M4,18.5 L4,9.5 C4,7.8 5,7 6.8,7 L9,7 C10,7 10.6,7.8 11.2,9.3 L17,9.3 L17,13 L9.5,13Z" fill="url(#fh4)"/><path d="M4,18.5 L4,9.5 C4,7.8 5,7 6.8,7 L9,7 C10,7 10.6,7.8 11.2,9.3 L17.5,9.3" fill="none" stroke="url(#fg4)" stroke-width="1.4"/><path d="M4.3,18.5 L9.5,12.8 L16,12.8" fill="none" stroke="#bbb" stroke-width="0.9"/><g transform="translate(-2,-1.5)"><rect x="13.5" y="12.5" width="9" height="11" fill="#fff" stroke="#333"/><path d="M13.5,16 L22.5,16 M17,16 L17,23.5 M17,19.5 L22.5,19.5" stroke="#333" stroke-width="0.8"/></g></svg>
<div class="btn" style="left:739px;top:217.5px;width:26px;height:30px;background:#f2f5fa;border-color:#c7cacf"></div>
<svg style="left:739px;top:217.5px" width="26" height="30" viewBox="0 0 26 30"><defs><linearGradient id="fg5" x1="0" y1="0" x2="1" y2="0"><stop offset="0" stop-color="#555"/><stop offset="0.5" stop-color="#8a8a8a"/><stop offset="1" stop-color="#e0e0e0" stop-opacity="0.3"/></linearGradient><linearGradient id="fh5" x1="0" y1="0" x2="1" y2="1"><stop offset="0" stop-color="#c8c8c8"/><stop offset="1" stop-color="#f2f5fa"/></linearGradient></defs><path d="M4,18.5 L4,9.5 C4,7.8 5,7 6.8,7 L9,7 C10,7 10.6,7.8 11.2,9.3 L17,9.3 L17,13 L9.5,13Z" fill="url(#fh5)"/><path d="M4,18.5 L4,9.5 C4,7.8 5,7 6.8,7 L9,7 C10,7 10.6,7.8 11.2,9.3 L17.5,9.3" fill="none" stroke="url(#fg5)" stroke-width="1.4"/><path d="M4.3,18.5 L9.5,12.8 L16,12.8" fill="none" stroke="#bbb" stroke-width="0.9"/><g transform="translate(-2,-1.5)"><path d="M12,15 L15,17 M23,15 L20,17 M12,23 L15,21 M23,23 L20,21 M17.5,13 L17.5,16 M17.5,25 L17.5,22" stroke="#333" stroke-width="1.3"/></g></svg>
<div class="btn" style="left:739px;top:250.5px;width:26px;height:30px;background:#f2f5fa;border-color:#c7cacf"></div>
<svg style="left:739px;top:250.5px" width="26" height="30" viewBox="0 0 26 30"><defs><linearGradient id="fg6" x1="0" y1="0" x2="1" y2="0"><stop offset="0" stop-color="#555"/><stop offset="0.5" stop-color="#8a8a8a"/><stop offset="1" stop-color="#e0e0e0" stop-opacity="0.3"/></linearGradient><linearGradient id="fh6" x1="0" y1="0" x2="1" y2="1"><stop offset="0" stop-color="#c8c8c8"/><stop offset="1" stop-color="#f2f5fa"/></linearGradient></defs><path d="M4,18.5 L4,9.5 C4,7.8 5,7 6.8,7 L9,7 C10,7 10.6,7.8 11.2,9.3 L17,9.3 L17,13 L9.5,13Z" fill="url(#fh6)"/><path d="M4,18.5 L4,9.5 C4,7.8 5,7 6.8,7 L9,7 C10,7 10.6,7.8 11.2,9.3 L17.5,9.3" fill="none" stroke="url(#fg6)" stroke-width="1.4"/><path d="M4.3,18.5 L9.5,12.8 L16,12.8" fill="none" stroke="#bbb" stroke-width="0.9"/><g transform="translate(-2,-1.5)"><rect x="13" y="14" width="10" height="10" fill="#fff" stroke="#333"/><path d="M14,23 L17,17 L19,20 L20.5,18 L22,23Z" fill="#222"/></g></svg>
<div class="btn" style="left:739px;top:283.5px;width:26px;height:30px;background:#f2f5fa;border-color:#c7cacf"></div>
<svg style="left:739px;top:283.5px" width="26" height="30" viewBox="0 0 26 30"><defs><linearGradient id="fg7" x1="0" y1="0" x2="1" y2="0"><stop offset="0" stop-color="#555"/><stop offset="0.5" stop-color="#8a8a8a"/><stop offset="1" stop-color="#e0e0e0" stop-opacity="0.3"/></linearGradient><linearGradient id="fh7" x1="0" y1="0" x2="1" y2="1"><stop offset="0" stop-color="#c8c8c8"/><stop offset="1" stop-color="#f2f5fa"/></linearGradient></defs><path d="M4,18.5 L4,9.5 C4,7.8 5,7 6.8,7 L9,7 C10,7 10.6,7.8 11.2,9.3 L17,9.3 L17,13 L9.5,13Z" fill="url(#fh7)"/><path d="M4,18.5 L4,9.5 C4,7.8 5,7 6.8,7 L9,7 C10,7 10.6,7.8 11.2,9.3 L17.5,9.3" fill="none" stroke="url(#fg7)" stroke-width="1.4"/><path d="M4.3,18.5 L9.5,12.8 L16,12.8" fill="none" stroke="#bbb" stroke-width="0.9"/><g transform="translate(-2,-1.5)"><rect x="13" y="14" width="10" height="10" fill="#fff" stroke="#333"/><path d="M15,22 L21,16 M14.5,22.5 L15.5,20" stroke="#111" stroke-width="1.5"/></g></svg>
<div class="btn" style="left:739px;top:316.5px;width:26px;height:30px;background:#f2f5fa;border-color:#c7cacf"></div>
<svg style="left:739px;top:316.5px" width="26" height="30" viewBox="0 0 26 30"><defs><linearGradient id="fg8" x1="0" y1="0" x2="1" y2="0"><stop offset="0" stop-color="#555"/><stop offset="0.5" stop-color="#8a8a8a"/><stop offset="1" stop-color="#e0e0e0" stop-opacity="0.3"/></linearGradient><linearGradient id="fh8" x1="0" y1="0" x2="1" y2="1"><stop offset="0" stop-color="#c8c8c8"/><stop offset="1" stop-color="#f2f5fa"/></linearGradient></defs><path d="M4,18.5 L4,9.5 C4,7.8 5,7 6.8,7 L9,7 C10,7 10.6,7.8 11.2,9.3 L17,9.3 L17,13 L9.5,13Z" fill="url(#fh8)"/><path d="M4,18.5 L4,9.5 C4,7.8 5,7 6.8,7 L9,7 C10,7 10.6,7.8 11.2,9.3 L17.5,9.3" fill="none" stroke="url(#fg8)" stroke-width="1.4"/><path d="M4.3,18.5 L9.5,12.8 L16,12.8" fill="none" stroke="#bbb" stroke-width="0.9"/><g transform="translate(-2,-1.5)"><circle cx="16" cy="18" r="2" fill="#333"/><circle cx="20.5" cy="18" r="2" fill="#333"/><path d="M13,23 C13,20 19,20 19,23Z M17.5,23 C17.5,20 23.5,20 23.5,23Z" fill="#333"/></g></svg>
<div class="btn" style="left:739px;top:349.5px;width:26px;height:30px;background:#f2f5fa;border-color:#c7cacf"></div>
<svg style="left:739px;top:349.5px" width="26" height="30" viewBox="0 0 26 30"><defs><linearGradient id="fg9" x1="0" y1="0" x2="1" y2="0"><stop offset="0" stop-color="#555"/><stop offset="0.5" stop-color="#8a8a8a"/><stop offset="1" stop-color="#e0e0e0" stop-opacity="0.3"/></linearGradient><linearGradient id="fh9" x1="0" y1="0" x2="1" y2="1"><stop offset="0" stop-color="#c8c8c8"/><stop offset="1" stop-color="#f2f5fa"/></linearGradient></defs><path d="M4,18.5 L4,9.5 C4,7.8 5,7 6.8,7 L9,7 C10,7 10.6,7.8 11.2,9.3 L17,9.3 L17,13 L9.5,13Z" fill="url(#fh9)"/><path d="M4,18.5 L4,9.5 C4,7.8 5,7 6.8,7 L9,7 C10,7 10.6,7.8 11.2,9.3 L17.5,9.3" fill="none" stroke="url(#fg9)" stroke-width="1.4"/><path d="M4.3,18.5 L9.5,12.8 L16,12.8" fill="none" stroke="#bbb" stroke-width="0.9"/><g transform="translate(-2,-1.5)"><circle cx="18" cy="13" r="1.6" fill="#333"/><path d="M14,15.5 L22,15.5 M18,15 L18,20 M18,20 L16,25 M18,20 L20,25" stroke="#333" stroke-width="1.2"/></g></svg>
<div class="a" style="left:767px;top:51px;width:190px;height:666px;background:#dfe1e5"></div>
<div class="a" style="left:768px;top:52px;width:188px;height:16px;background:linear-gradient(#e2e3e6,#d6d8db);border:1px solid #cdd0d4"></div>
<div class="mbtn" style="left:769px;top:54px;height:11px"></div>
<div class="tab" style="left:782px;top:53px;width:55px;height:15px"></div>
<div class="a" style="left:789px;top:58px;width:8px;height:7px;border:1px solid #777;background:#fff"></div>
<div class="a" style="left:786px;top:55px;width:9px;height:8px;border:1.5px solid #e02020;background:#fff"></div>
<div class="t" style="left:802px;top:57px;font-size:8px;letter-spacing:-0.2px;color:#444">Navigator</div>
<div class="tabg" style="left:838px;top:54px;width:19px;height:14px;opacity:.8"></div>
<div class="tabg" style="left:858px;top:54px;width:20px;height:14px;opacity:.8"></div>
<div class="tabg" style="left:879px;top:54px;width:20px;height:14px;opacity:.8"></div>
<div class="a" style="left:841px;top:56px;width:11px;height:10px;border:1px solid #aaa"></div>
<div class="a" style="left:863px;top:57px;width:10px;height:10px;border-radius:50%;border:2px solid #b8babd"></div>
<div class="a" style="left:884px;top:56px;width:11px;height:11px;border-radius:50%;background:#b4b6b9"></div><div class="a" style="left:888.5px;top:58px;width:2px;height:7px;background:#eee"></div>
<div class="a pbg" style="left:768px;top:68px;width:188px;height:77px"></div>
<div class="a" style="left:768px;top:68px;width:183px;height:43px;background:#c9c9c9;border-top:1px solid #b8b8b8"></div>
<div class="a" style="left:951px;top:68px;width:5px;height:77px;background:#d0d3d8"></div>
<div class="a" style="left:840px;top:75.5px;width:40px;height:27px;background:#fff"></div>
<svg style="left:0;top:0" width="960" height="720"><path d="M864,83 C868,81.5 873,81.5 876,83.5 L876,84.5 C872,83.5 868,83.5 864,84.5Z" fill="#000"/><path d="M865,89 C868,86.5 873,86 877,88.5 C876,91 872,92.5 869,91.5 C867,90.5 866,90 865,89Z" fill="#000"/><path d="M840,76 l2,1.5 l-1,1Z M878,97 l1.5,2 l-1,0.5Z" fill="#000"/></svg>
<div class="a" style="left:839px;top:68px;width:1.2px;height:43px;background:#e03a3a"></div>
<div class="a" style="left:880px;top:68px;width:1.2px;height:43px;background:#e03a3a"></div>
<svg style="left:772px;top:113px" width="67" height="30" viewBox="0 0 67 30"><rect x="0.5" y="3.5" width="66" height="8.5" fill="#fff" stroke="#bbb"/><path d="M1,12 L66,4 L66,12Z" fill="#a8abaf"/><rect x="41" y="0" width="2.2" height="15" fill="#d6d8dc" stroke="#bbb" stroke-width="0.5"/><rect x="0.5" y="18.5" width="66" height="8.5" fill="#fff" stroke="#bbb"/><path d="M1,19 L1,27 L66,27 L66,19 C60,24 55,26 50,23 C45,20 38,18 33,21 C27,26 20,26 15,24 C10,22 5,20 1,19Z" fill="#a8abaf"/><path d="M1,19 L14,27 L52,27 L66,19Z" fill="#fff" opacity="0"/><rect x="33" y="15" width="2.2" height="15" fill="#d6d8dc" stroke="#bbb" stroke-width="0.5"/></svg>
<div class="t" style="left:854px;top:115.5px;font-size:10.5px;letter-spacing:-0.3px;color:#222;transform:scaleX(0.72);transform-origin:left">150.0</div>
<div class="t" style="left:863px;top:130.5px;font-size:10.5px;letter-spacing:-0.3px;color:#222;transform:scaleX(0.72);transform-origin:left">0.0</div>
<svg style="left:874px;top:113px" width="80" height="30" viewBox="0 0 80 30"><circle cx="5.5" cy="5.5" r="4.2" fill="#f4f4f4" stroke="#666" stroke-width="1.2"/><path d="M3.5,5.5 L7.5,5.5" stroke="#333"/><path d="M8.5,8.5 L11,11" stroke="#222" stroke-width="1.6"/><circle cx="20.5" cy="5.5" r="4.2" fill="#f4f4f4" stroke="#666" stroke-width="1.2"/><path d="M18.5,5.5 L22.5,5.5 M20.5,3.5 L20.5,7.5" stroke="#333"/><path d="M23.5,8.5 L26,11" stroke="#222" stroke-width="1.6"/><rect x="31" y="0.5" width="11" height="11" fill="#222"/><rect x="33.5" y="3" width="6" height="6" fill="#555" stroke="#aaa" stroke-width="0.8"/><rect x="46" y="0" width="0.8" height="12" fill="#ddd"/><rect x="48.5" y="1" width="8" height="6" fill="#fff" stroke="#555"/><rect x="51.5" y="4" width="8" height="7" fill="#fff" stroke="#555"/><path d="M51,2 L58,9" stroke="#111" stroke-width="1.3"/><rect x="63.5" y="1" width="12" height="10" fill="#fff" stroke="#555"/><rect x="63.5" y="1" width="12" height="1.5" fill="#333"/><path d="M66,3.5 L73.5,10" stroke="#111" stroke-width="1.5"/><path d="M2,25 C0,20 2,16 6,16 C9.5,16 11,19 10.5,22" fill="none" stroke="#111" stroke-width="1.8"/><path d="M-0.5,21.5 L2,26 L5,21.5Z" fill="#111"/><path d="M25,25 C27,20 25,16 21,16 C17.5,16 16,19 16.5,22" fill="none" stroke="#111" stroke-width="1.8"/><path d="M27.5,21.5 L25,26 L22,21.5Z" fill="#111"/><circle cx="37" cy="21.5" r="4.5" fill="none" stroke="#555" stroke-width="1.2" stroke-dasharray="1.6 1.2"/><rect x="46" y="15" width="0.8" height="12" fill="#ddd"/><path d="M49,19 L49,27 L53,23Z" fill="#fff" stroke="#555" stroke-width="0.8"/><path d="M58,19 L58,27 L54,23Z" fill="#222"/><path d="M50,19 C50,16 57,16 57,19" fill="none" stroke="#222" stroke-width="1.3"/><path d="M53.5,15 L53.5,28" stroke="#555" stroke-dasharray="1 1"/><path d="M73,18 C70,15 65,16 64.5,20 C64.5,24 68,26 72,25" fill="none" stroke="#222" stroke-width="1.5"/><path d="M68,17 L75,17 L71.5,21Z" fill="#222"/><path d="M68,27 L75,27 L71.5,23Z" fill="#fff" stroke="#555" stroke-width="0.7"/></svg>
<div class="a" style="left:768px;top:145px;width:188px;height:16px;background:linear-gradient(#e2e3e6,#d6d8db);border:1px solid #cdd0d4"></div>
<div class="mbtn" style="left:769px;top:147px;height:11px"></div>
<div class="tab" style="left:782px;top:146px;width:67px;height:15px"></div>
<svg style="left:785px;top:147px" width="14" height="13" viewBox="0 0 14 13"><path d="M1,7 L4,10 L12,1" fill="none" stroke="#e01818" stroke-width="2"/><rect x="0.5" y="10.5" width="12" height="2" fill="#111"/></svg>
<div class="t" style="left:802px;top:150px;font-size:7.5px;letter-spacing:-0.3px;color:#444">Layer Property</div>
<div class="tabg" style="left:850px;top:147px;width:21px;height:14px;opacity:.8"></div>
<div class="tabg" style="left:873px;top:147px;width:20px;height:14px;opacity:.8"></div>
<svg style="left:852px;top:148px" width="40" height="12" viewBox="0 0 40 12"><path d="M3,2 C8,1 8,4 3,4 C8,5 8,7 4,8" fill="none" stroke="#aaa" stroke-width="1.2"/><circle cx="9" cy="9" r="3" fill="#d0d0d0"/><path d="M30,1 L30,6 L26,11 L34,11 L30,6" fill="none" stroke="#aaa" stroke-width="1.3"/></svg>
<div class="a pbg" style="left:768px;top:161px;width:175px;height:120px;border-top:1px solid #c4c7cc;border-left:1px solid #d8dbe0"></div>
<div class="a" style="left:943px;top:161px;width:13px;height:120px;background:#c9ccd1;border-left:1px solid #dadde2"></div>
<div class="sep" style="left:772px;top:168px;width:167px;background:#d8dce2"></div>
<div class="a pbg" style="left:775px;top:163px;width:26px;height:11px"></div>
<div class="t" style="left:776px;top:164.5px;font-size:8.5px;color:#222">Effect</div>
<div class="btn" style="left:858px;top:174px;width:82px;height:14px"></div>
<div class="a" style="left:864px;top:177.5px;width:7px;height:7px;border-radius:50%;background:#333;box-shadow:0 0 0 1.5px #fff"></div>
<div class="a" style="left:879px;top:175.5px;width:11px;height:11px;border-radius:50%;background:#5bb6ec;border:1.2px solid #555;box-shadow:inset 2px 2px 0 #f4f5f7"></div>
<svg style="left:897px;top:175px" width="12" height="12" viewBox="0 0 12 12"><rect width="12" height="12" fill="#fff"/><g fill="#222"><rect x="0.0" y="0.0" width="1.5" height="1.5"/><rect x="0.0" y="3.0" width="1.5" height="1.5"/><rect x="0.0" y="6.0" width="1.5" height="1.5"/><rect x="0.0" y="9.0" width="1.5" height="1.5"/><rect x="1.5" y="1.5" width="1.5" height="1.5"/><rect x="1.5" y="4.5" width="1.5" height="1.5"/><rect x="1.5" y="7.5" width="1.5" height="1.5"/><rect x="1.5" y="10.5" width="1.5" height="1.5"/><rect x="3.0" y="0.0" width="1.5" height="1.5"/><rect x="3.0" y="3.0" width="1.5" height="1.5"/><rect x="3.0" y="6.0" width="1.5" height="1.5"/><rect x="3.0" y="9.0" width="1.5" height="1.5"/><rect x="4.5" y="1.5" width="1.5" height="1.5"/><rect x="4.5" y="4.5" width="1.5" height="1.5"/><rect x="4.5" y="7.5" width="1.5" height="1.5"/><rect x="4.5" y="10.5" width="1.5" height="1.5"/><rect x="6.0" y="0.0" width="1.5" height="1.5"/><rect x="6.0" y="3.0" width="1.5" height="1.5"/><rect x="6.0" y="6.0" width="1.5" height="1.5"/><rect x="6.0" y="9.0" width="1.5" height="1.5"/><rect x="7.5" y="1.5" width="1.5" height="1.5"/><rect x="7.5" y="4.5" width="1.5" height="1.5"/><rect x="7.5" y="7.5" width="1.5" height="1.5"/><rect x="7.5" y="10.5" width="1.5" height="1.5"/><rect x="9.0" y="0.0" width="1.5" height="1.5"/><rect x="9.0" y="3.0" width="1.5" height="1.5"/><rect x="9.0" y="6.0" width="1.5" height="1.5"/><rect x="9.0" y="9.0" width="1.5" height="1.5"/><rect x="10.5" y="1.5" width="1.5" height="1.5"/><rect x="10.5" y="4.5" width="1.5" height="1.5"/><rect x="10.5" y="7.5" width="1.5" height="1.5"/><rect x="10.5" y="10.5" width="1.5" height="1.5"/></g></svg>
<div class="a" style="left:917px;top:178px;width:10px;height:9px;background:#fff;border:1px solid #888"></div><div class="a" style="left:915px;top:175px;width:10px;height:9px;background:#7ccdfa;border:1px solid #4aa8e0"></div>
<svg style="left:931px;top:179px" width="8" height="5" viewBox="0 0 8 5"><path d="M0,0 L8,0 L4,4.5Z" fill="#444"/></svg>
<div class="sep" style="left:772px;top:196px;width:167px;background:#d8dce2"></div>
<div class="a pbg" style="left:775px;top:191px;width:67px;height:11px"></div>
<div class="t" style="left:776px;top:192.5px;font-size:8.5px;color:#222;letter-spacing:-0.1px">Expression color</div>
<div class="btn" style="left:782px;top:204px;width:119px;height:15px"></div>
<div class="a" style="left:820px;top:206px;width:3px;height:10px;background:#f4a0a0"></div><div class="a" style="left:823px;top:206px;width:3px;height:10px;background:#a0d0f4"></div><div class="a" style="left:826px;top:206px;width:3px;height:10px;background:#a8f0a0"></div>
<div class="t" style="left:834px;top:207px;font-size:9px;color:#222">Color</div>
<svg style="left:892px;top:209px" width="8" height="5" viewBox="0 0 8 5"><path d="M0,0 L8,0 L4,4.5Z" fill="#444"/></svg>
<!-- LAYER PANEL -->
<div class="a" style="left:768px;top:283px;width:188px;height:14px;background:linear-gradient(#e2e3e6,#d6d8db);border:1px solid #cdd0d4"></div>
<div class="mbtn" style="left:769px;top:285px;height:10px"></div>
<div class="tab" style="left:782px;top:284px;width:40px;height:13px"></div>
<svg style="left:786px;top:285px" width="13" height="12" viewBox="0 0 13 12"><path d="M1,3 L6.5,0.8 L12,3 L6.5,5.2Z M1,6 L6.5,8.2 L12,6 M1,9 L6.5,11.2 L12,9" fill="none" stroke="#333" stroke-width="1.1"/></svg>
<div class="t" style="left:802px;top:288px;font-size:8px;letter-spacing:-0.3px;color:#333">Layer</div>
<div class="tabg" style="left:822px;top:285px;width:45px;height:12px;opacity:.85"></div>
<svg style="left:826px;top:285px" width="13" height="11" viewBox="0 0 13 11"><path d="M2,10 C1,6 3,4 6,4 L10,4" fill="none" stroke="#999" stroke-width="1.6"/><rect x="7" y="0.5" width="5" height="5" fill="#aaa"/></svg>
<div class="t" style="left:842px;top:289px;font-size:8px;letter-spacing:-0.3px;color:#aaa">History</div>
<div class="a pbg" style="left:768px;top:297px;width:188px;height:420px"></div>
<div class="btn" style="left:769px;top:299px;width:92px;height:14px"></div>
<div class="t" style="left:797px;top:302px;font-size:9px;color:#111;letter-spacing:-0.1px">Normal</div>
<svg style="left:851px;top:304px" width="8" height="5" viewBox="0 0 8 5"><path d="M0,0 L8,0 L4,4.5Z" fill="#444"/></svg>
<div class="a" style="left:865px;top:303px;width:61px;height:7px;background-color:#fff;background-image:linear-gradient(90deg,rgba(255,255,255,0.2),rgba(150,150,150,0.9)),linear-gradient(45deg,#c8c8c8 25%,transparent 25%,transparent 75%,#c8c8c8 75%),linear-gradient(45deg,#c8c8c8 25%,transparent 25%,transparent 75%,#c8c8c8 75%);background-size:100% 100%,6px 6px,6px 6px;background-position:0 0,0 0,3px 3px;border:1px solid #c0c0c0"></div>
<div class="a" style="left:925px;top:300px;width:2px;height:14px;background:#cdd0d4"></div>
<div class="t" style="left:931px;top:301px;font-size:10.5px;color:#111;transform:scaleX(0.7);transform-origin:left">100</div>
<svg style="left:945px;top:300px" width="8" height="13" viewBox="0 0 8 13"><path d="M0.5,5 L4,1 L7.5,5Z M0.5,8 L4,12 L7.5,8Z" fill="#999"/></svg>
<div class="btn" style="left:769px;top:315px;width:26px;height:13px"></div>
<div class="a" style="left:770px;top:316px;width:14px;height:11px;background:linear-gradient(#fafbfc,#e8eaee);border-right:1px solid #ccc"></div>
<svg style="left:786px;top:320px" width="7" height="4" viewBox="0 0 7 4"><path d="M0,0 L7,0 L3.5,4Z" fill="#444"/></svg>
<svg style="left:805px;top:316px" width="150" height="13" viewBox="0 0 150 13"><ellipse cx="7.5" cy="6.5" rx="5.5" ry="3.5" fill="#555" stroke="#333"/><ellipse cx="7.5" cy="5" rx="4.5" ry="1.8" fill="#ddd"/><path d="M22,2 L22,12 L25,12 L25,2Z" fill="#999" stroke="#444" stroke-width="0.6"/><path d="M18,1 L29,6 M29,1 L18,6" stroke="#aaa" stroke-width="0.5"/><path d="M35,1 L40,1 L40,9 L37.5,12 L35,9Z" fill="#26a6d8"/><path d="M35,7 L40,7 L40,9 L37.5,12 L35,9Z" fill="#f4c820"/><rect x="47" y="6" width="10" height="7" rx="1" fill="#444"/><path d="M49,6 L49,3.5 C49,0.5 55,0.5 55,3.5 L55,6" fill="none" stroke="#444" stroke-width="1.6"/><rect x="51" y="8" width="2" height="3" fill="#ddd"/><rect x="61" y="4" width="7" height="5" rx="1" fill="#fff" stroke="#444"/><path d="M62.5,4 L62.5,2.5 C62.5,0.5 66.5,0.5 66.5,2.5 L66.5,4" fill="none" stroke="#444"/><rect x="67" y="7" width="8" height="6" fill="#fff" stroke="#999" stroke-width="0.6"/><rect x="71" y="7" width="4" height="3" fill="#333"/><rect x="67" y="10" width="4" height="3" fill="#333"/></svg>
<div class="btn" style="left:881px;top:315px;width:23px;height:13px;opacity:.75"></div>
<svg style="left:884px;top:316px" width="18" height="12" viewBox="0 0 18 12"><path d="M2,2 L10,10 M6,6 L10,10" stroke="#c8c8c8" stroke-width="1.4"/><path d="M5,8 L9,12 M9,8 L5,12" stroke="#bbb" stroke-width="1.2"/><path d="M11,5 L16,5 L13.5,8Z" fill="#c0c0c0"/></svg>
<div class="btn" style="left:906px;top:315px;width:23px;height:13px;opacity:.75"></div>
<svg style="left:909px;top:316px" width="18" height="12" viewBox="0 0 18 12"><path d="M2,2 L10,10 M6,6 L10,10" stroke="#c8c8c8" stroke-width="1.4"/><path d="M5,8 L9,12 M9,8 L5,12" stroke="#bbb" stroke-width="1.2"/><path d="M11,5 L16,5 L13.5,8Z" fill="#c0c0c0"/></svg>
<div class="btn" style="left:930px;top:315px;width:23px;height:13px"></div>
<div class="a" style="left:934px;top:318px;width:7px;height:7px;background:#fff;border:1px solid #999"></div><div class="a" style="left:932px;top:316px;width:7px;height:7px;background:#3a8ee8"></div>
<svg style="left:943px;top:320px" width="8" height="4" viewBox="0 0 8 4"><path d="M0,0 L8,0 L4,4Z" fill="#333"/></svg>
<div class="sep" style="left:769px;top:329px;width:186px;background:#dde0e5"></div>
<svg style="left:769px;top:331px" width="13" height="12" viewBox="0 0 13 12"><path d="M1,3 L6.5,0.8 L12,3 L6.5,5.2Z M1,6 L6.5,8.2 L12,6 M1,9 L6.5,11.2 L12,9" fill="none" stroke="#444" stroke-width="1.1"/></svg>
<svg style="left:835px;top:331px" width="120" height="14" viewBox="0 0 120 14"><path d="M1.5,1.5 L10.5,1.5 L10.5,9 L7,12.5 L1.5,12.5Z" fill="#fff" stroke="#444"/><path d="M7,12.5 L7.5,9 L10.5,9" fill="none" stroke="#444"/><path d="M15.5,1.5 L24.5,1.5 L24.5,8 M15.5,1.5 L15.5,12.5 L21,12.5" fill="#fff" stroke="#444"/><rect x="21" y="9" width="5" height="5" fill="#ddd" stroke="#777" stroke-width="0.6"/><path d="M30,3 L33,1.5 L36,1.5 L36,3 L41,3 L41,12.5 L30,12.5Z" fill="#ccc" stroke="#555" stroke-width="0.8"/><rect x="36" y="6" width="7" height="7" rx="1.5" fill="#fff" stroke="#444"/><path d="M47,9 L52.5,12.5 L58,9 L52.5,5.5Z" fill="#222"/><path d="M47,5 L52.5,1.5 L58,5 L52.5,8.5Z" fill="#fff" stroke="#333" stroke-width="0.8"/><path d="M52.5,2 L52.5,8 M50.5,6 L52.5,8 L54.5,6" fill="none" stroke="#222"/><path d="M61,5 L66.5,1.5 L72,5 L66.5,8.5Z" fill="#222"/><path d="M61,9 L66.5,5.5 L72,9 L66.5,12.5Z" fill="#fff" stroke="#333" stroke-width="0.8"/><path d="M66.5,3 L66.5,9 M64.5,7 L66.5,9 L68.5,7" fill="none" stroke="#fff"/><rect x="75.5" y="3.5" width="11" height="7" fill="#555" stroke="#333" stroke-width="0.6"/><circle cx="81" cy="7" r="2.3" fill="#fff"/><path d="M91,6 L97,3 L101,6 L96,10Z M92,10 L92,13 M90.5,11.5 L92,13 L93.5,11.5" fill="none" stroke="#c8c8c8" stroke-width="1"/><path d="M106,4 L107,13 L115,13 L116,4Z" fill="#fff" stroke="#555"/><rect x="105" y="2" width="12" height="2.2" rx="1" fill="#ddd" stroke="#555" stroke-width="0.8"/><path d="M109,6 L109,12 M113,6 L113,12" stroke="#888" stroke-width="0.7"/></svg>
<div class="a" style="left:771px;top:346px;width:174px;height:371px;background:#f2f5fa;border-left:1px solid #c9ccd1;border-top:1px solid #c9ccd1"></div>
<div class="a" style="left:945px;top:346px;width:10px;height:371px;background:#d2d5da;border-left:1px solid #e2e4e8"></div>
<div class="a" style="left:954px;top:346px;width:2px;height:371px;background:#c0c3c8"></div>
<div class="a" style="left:772px;top:347px;width:173px;height:74px;background:#f2f5fa"></div>
<div class="a" style="left:802px;top:347px;width:143px;height:74px;background:#d5e6f3"></div>
<div class="a" style="left:772px;top:421px;width:173px;height:1px;background:#c9ccd1"></div>
<div class="a" style="left:772px;top:491px;width:173px;height:1px;background:#c9ccd1"></div>
<div class="a" style="left:772px;top:562px;width:173px;height:1px;background:#c9ccd1"></div>
<div class="a" style="left:786px;top:347px;width:1px;height:215px;background:#d6d9de"></div>
<div class="a" style="left:799px;top:347px;width:1px;height:215px;background:#d6d9de"></div>
<svg style="left:773px;top:383px" width="11" height="7" viewBox="0 0 11 7"><path d="M0.5,3.5 C3,0 8,0 10.5,3.5 C8,7 3,7 0.5,3.5Z" fill="#fff" stroke="#555" stroke-width="0.8"/><ellipse cx="5.5" cy="3.5" rx="3" ry="2.6" fill="#222"/><ellipse cx="5.5" cy="2" rx="3.5" ry="1" fill="#777"/></svg>
<svg style="left:773px;top:453px" width="11" height="7" viewBox="0 0 11 7"><path d="M0.5,3.5 C3,0 8,0 10.5,3.5 C8,7 3,7 0.5,3.5Z" fill="#fff" stroke="#555" stroke-width="0.8"/><ellipse cx="5.5" cy="3.5" rx="3" ry="2.6" fill="#222"/><ellipse cx="5.5" cy="2" rx="3.5" ry="1" fill="#777"/></svg>
<svg style="left:773px;top:524px" width="11" height="7" viewBox="0 0 11 7"><path d="M0.5,3.5 C3,0 8,0 10.5,3.5 C8,7 3,7 0.5,3.5Z" fill="#fff" stroke="#555" stroke-width="0.8"/><ellipse cx="5.5" cy="3.5" rx="3" ry="2.6" fill="#222"/><ellipse cx="5.5" cy="2" rx="3.5" ry="1" fill="#777"/></svg>
<svg style="left:788px;top:381px" width="10" height="10" viewBox="0 0 10 10"><path d="M1,9 L2,6 L8,0.5 L9.5,2 L4,8Z" fill="#fff" stroke="#444" stroke-width="0.9"/><path d="M1,9 L2.5,7.5" stroke="#222"/></svg>
<div class="a" style="left:804px;top:350px;width:100px;height:69px;background-color:#fff;background-image:linear-gradient(45deg,#e0e0e0 25%,transparent 25%,transparent 75%,#e0e0e0 75%),linear-gradient(45deg,#e0e0e0 25%,transparent 25%,transparent 75%,#e0e0e0 75%);background-size:5px 5px;background-position:0 0,2.5px 2.5px;border:1px solid #3c4a58;border-top-width:2px;border-bottom-width:2px"></div>
<div class="a" style="left:805px;top:424px;width:98px;height:66px;background-color:#fff;background-image:linear-gradient(45deg,#e0e0e0 25%,transparent 25%,transparent 75%,#e0e0e0 75%),linear-gradient(45deg,#e0e0e0 25%,transparent 25%,transparent 75%,#e0e0e0 75%);background-size:5px 5px;background-position:0 0,2.5px 2.5px;border:1px solid #555"></div>
<div class="a" style="left:805px;top:495px;width:98px;height:67px;background:#fff;border:1px solid #555"></div>
<svg style="left:0;top:0" width="960" height="720"><g transform="translate(753.62,312.27) scale(0.2055,0.2094)" fill="#000"><path d="M542,268 C548,264 553,262 565,260.5 C580,259 595,258 610,258.5 C630,259 645,262 658,267 C668,271 677,276 683,281 C686,284 687,287 686,288 C680,287 672,285.5 665,285.5 C650,284 635,283 620,282 C605,281.5 590,283 575,285 C560,287 550,289 543,289.5 C541,284 540,276 542,268Z"/><path d="M551,364 C556,357 562,351 570,345 C580,338 592,333 605,330 C620,327 640,327 655,328 C668,331 680,336 690,342 C697,347 701,353 701,360 C700,366 694,370 685,374 C675,378 665,381 655,384 C645,386 635,387 625,387 C612,386 600,382 593,376 C588,370 586,362 586,352 L586,346 C578,349 571,353 565,358 C560,362 556,365 551,364Z"/><path d="M645,347 C650,349 654,355 655,362 C655,367 652,371 646,372 C641,371 640,369 641,366 C646,361 647,354 645,347Z" fill="#fff"/><path d="M249.5,185 L270,185 C274,190 278,196 278.5,202 C278.5,208 274,213 268,212.5 C263,212 258,207 253,201 L249.5,198Z"/><path d="M722,505 L722,483 C716,480 711,477 705,476 C699,476 694,479 694,484 C694,490 700,497 708,505Z"/></g></svg>
<svg style="left:0;top:0" width="960" height="720"><g transform="translate(755.15,388.00) scale(0.2034,0.2000)" fill="#000"><path d="M542,268 C548,264 553,262 565,260.5 C580,259 595,258 610,258.5 C630,259 645,262 658,267 C668,271 677,276 683,281 C686,284 687,287 686,288 C680,287 672,285.5 665,285.5 C650,284 635,283 620,282 C605,281.5 590,283 575,285 C560,287 550,289 543,289.5 C541,284 540,276 542,268Z"/><path d="M551,364 C556,357 562,351 570,345 C580,338 592,333 605,330 C620,327 640,327 655,328 C668,331 680,336 690,342 C697,347 701,353 701,360 C700,366 694,370 685,374 C675,378 665,381 655,384 C645,386 635,387 625,387 C612,386 600,382 593,376 C588,370 586,362 586,352 L586,346 C578,349 571,353 565,358 C560,362 556,365 551,364Z"/><path d="M645,347 C650,349 654,355 655,362 C655,367 652,371 646,372 C641,371 640,369 641,366 C646,361 647,354 645,347Z" fill="#fff"/></g></svg>
<div class="t" style="left:905px;top:364px;font-size:9px;color:#222;letter-spacing:-0.4px">100 %<span style="font-size:7px;color:#666">Norm</span></div>
<div class="t" style="left:905px;top:408px;font-size:9px;color:#222;letter-spacing:-0.4px">Layer 1 <span style="color:#777">Cop</span></div>
<div class="a" style="left:932px;top:405px;width:13px;height:14px;background:linear-gradient(90deg,rgba(213,230,243,0),#d5e6f3)"></div>
<div class="t" style="left:905px;top:435px;font-size:9px;color:#222;letter-spacing:-0.4px">100 %<span style="font-size:7px;color:#777">Norm</span></div>
<div class="a" style="left:932px;top:432px;width:13px;height:14px;background:linear-gradient(90deg,rgba(242,245,250,0),#f2f5fa)"></div>
<div class="t" style="left:905px;top:479px;font-size:9px;color:#222;letter-spacing:-0.2px">Layer&nbsp; 1</div>
<div class="t" style="left:905px;top:550px;font-size:9px;color:#222">Paper</div>
<svg style="left:906px;top:495px" width="16" height="15" viewBox="0 0 16 15"><rect x="0.5" y="0.5" width="15" height="14" fill="#f4f4f4" stroke="#999"/><path d="M3,2 L9,2 L12,5 L12,13 L3,13Z" fill="#fff" stroke="#333"/><path d="M9,2 L9,5 L12,5" fill="none" stroke="#333"/></svg>
<div class="a" style="left:767px;top:716px;width:191px;height:4px;background:#c8cacd"></div>
<div class="a" style="left:0;top:18px;width:4px;height:702px;background:linear-gradient(90deg,#bdbfc2 0,#bdbfc2 1px,#e2e3e5 1px,#d6d8da 100%)"></div>
<div class="a" style="left:955px;top:18px;width:5px;height:702px;background:linear-gradient(90deg,#c4c6c9 0,#e2e3e5 2px,#dcdde0 4px,#bdbfc2 4px)"></div>
<div class="a" style="left:0;top:715px;width:960px;height:5px;background:linear-gradient(#bfc2c6 0,#bfc2c6 1px,#e0e1e3 1px,#d6d7da 3px,#c4c6c9 5px)"></div>
<svg style="left:0;top:0" width="960" height="720" viewBox="0 0 960 720">
<ellipse cx="262.6" cy="194.8" rx="33.2" ry="33.1" fill="none" stroke="#ee1111" stroke-width="2.8"/>
<path d="M295,217.2 L304,221.5 L306.5,231 L300.5,238.5 L289.5,238.5 L283.5,231 L286,221.5Z" fill="none" stroke="#666" stroke-width="0.6"/>
<rect x="672.5" y="456.5" width="67" height="66" fill="none" stroke="#ee1111" stroke-width="3"/>
</svg>

</body></html>
